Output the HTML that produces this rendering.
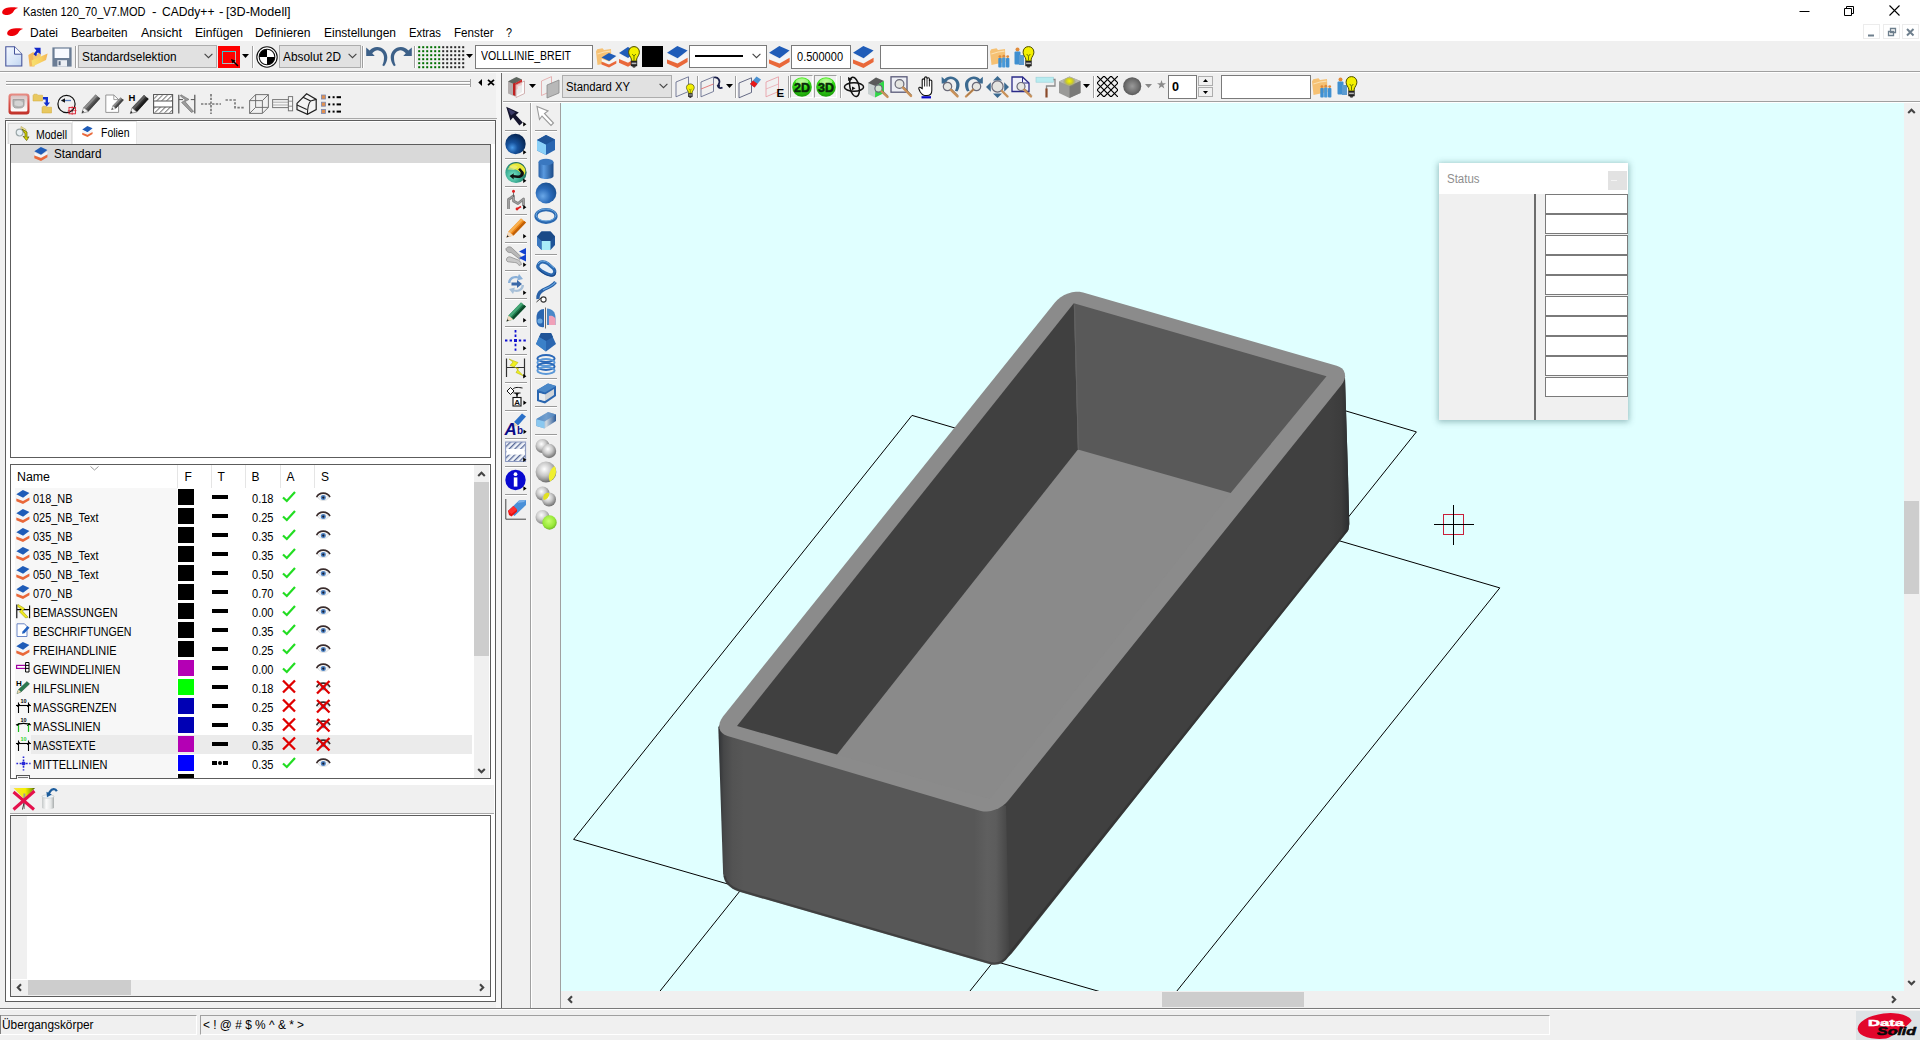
<!DOCTYPE html>
<html><head><meta charset="utf-8"><title>CADdy++</title>
<style>
html,body{margin:0;padding:0;}
body{width:1920px;height:1040px;overflow:hidden;background:#f0f0f0;font-family:"Liberation Sans",sans-serif;font-size:12px;position:relative;}
body div, body svg{position:absolute;box-sizing:border-box;}
svg{overflow:visible;}
</style></head><body>
<div style="left:0px;top:0px;width:1920px;height:41px;background:#fff;"></div>
<svg style="left:2px;top:7px;" width="16" height="8.4" viewBox="0 0 16 8.4"><path d="M0.2 4.8C0.6 2.6 3 1.1 6.5 0.6C10 0.1 14 0 16 0.9C13.8 1.6 12.6 2.6 11.8 4C10.8 6 9 7.6 5.6 8C2.6 8.3 -0.2 7.4 0.2 4.8Z" fill="#ee0008"/></svg>
<div style="left:22.5px;top:4px;font-size:12px;line-height:16px;color:#000;white-space:nowrap;transform-origin:0 0;transform:scaleX(0.9185);">Kasten 120_70_V7.MOD</div>
<div style="left:152px;top:4px;font-size:12px;line-height:16px;color:#000;white-space:nowrap;transform-origin:0 0;transform:scaleX(1.125);">-</div>
<div style="left:161.7px;top:4px;font-size:12px;line-height:16px;color:#000;white-space:nowrap;transform-origin:0 0;transform:scaleX(1.0087);">CADdy++</div>
<div style="left:219px;top:4px;font-size:12px;line-height:16px;color:#000;white-space:nowrap;transform-origin:0 0;transform:scaleX(1.125);">-</div>
<div style="left:226px;top:4px;font-size:12px;line-height:16px;color:#000;white-space:nowrap;transform-origin:0 0;transform:scaleX(1.0512);">[3D-Modell]</div>
<svg style="left:1799px;top:5px;" width="12" height="12" viewBox="0 0 12 12"><path d="M0.5 6.5H10.5" stroke="#000" stroke-width="1" fill="none"/></svg>
<svg style="left:1843px;top:5px;" width="12" height="12" viewBox="0 0 12 12"><path d="M1.5 3.5H8.5V10.5H1.5Z M3.5 3.5V1.5H10.5V8.5H8.5" stroke="#000" stroke-width="1" fill="none"/></svg>
<svg style="left:1889px;top:5px;" width="12" height="12" viewBox="0 0 12 12"><path d="M0.5 0.5L10.5 10.5M10.5 0.5L0.5 10.5" stroke="#000" stroke-width="1.1" fill="none"/></svg>
<svg style="left:7px;top:28px;" width="16" height="8.4" viewBox="0 0 16 8.4"><path d="M0.2 4.8C0.6 2.6 3 1.1 6.5 0.6C10 0.1 14 0 16 0.9C13.8 1.6 12.6 2.6 11.8 4C10.8 6 9 7.6 5.6 8C2.6 8.3 -0.2 7.4 0.2 4.8Z" fill="#ee0008"/></svg>
<div style="left:29.5px;top:25px;font-size:12px;line-height:16px;color:#000;white-space:nowrap;transform-origin:0 0;transform:scaleX(0.9994);">Datei</div>
<div style="left:70.5px;top:25px;font-size:12px;line-height:16px;color:#000;white-space:nowrap;transform-origin:0 0;transform:scaleX(0.9736);">Bearbeiten</div>
<div style="left:140.5px;top:25px;font-size:12px;line-height:16px;color:#000;white-space:nowrap;transform-origin:0 0;transform:scaleX(1.0421);">Ansicht</div>
<div style="left:194.5px;top:25px;font-size:12px;line-height:16px;color:#000;white-space:nowrap;transform-origin:0 0;transform:scaleX(1.0135);">Einfügen</div>
<div style="left:255px;top:25px;font-size:12px;line-height:16px;color:#000;white-space:nowrap;transform-origin:0 0;transform:scaleX(1.0146);">Definieren</div>
<div style="left:323.5px;top:25px;font-size:12px;line-height:16px;color:#000;white-space:nowrap;transform-origin:0 0;transform:scaleX(0.9993);">Einstellungen</div>
<div style="left:408.5px;top:25px;font-size:12px;line-height:16px;color:#000;white-space:nowrap;transform-origin:0 0;transform:scaleX(0.9412);">Extras</div>
<div style="left:453.5px;top:25px;font-size:12px;line-height:16px;color:#000;white-space:nowrap;transform-origin:0 0;transform:scaleX(0.9712);">Fenster</div>
<div style="left:506px;top:25px;font-size:12px;line-height:16px;color:#000;white-space:nowrap;transform-origin:0 0;transform:scaleX(0.8993);">?</div>
<div style="left:1863px;top:24px;width:17px;height:15px;background:#fff;border:1px solid #ececec;"></div>
<div style="left:1883px;top:24px;width:17px;height:15px;background:#fff;border:1px solid #ececec;"></div>
<div style="left:1902px;top:24px;width:17px;height:15px;background:#fff;border:1px solid #ececec;"></div>
<svg style="left:1867px;top:28px;" width="10" height="10" viewBox="0 0 10 10"><path d="M1 7.5H7" stroke="#6e7f8d" stroke-width="2" fill="none"/></svg>
<svg style="left:1887px;top:27px;" width="10" height="10" viewBox="0 0 10 10"><path d="M3.5 1.5H8.5V5.5H3.5Z M1.5 4.5H6.5V8.5H1.5Z" stroke="#6e7f8d" stroke-width="1.3" fill="#fff"/></svg>
<svg style="left:1906px;top:28px;" width="10" height="10" viewBox="0 0 10 10"><path d="M1 1L7.5 7.5M7.5 1L1 7.5" stroke="#6e7f8d" stroke-width="2" fill="none"/></svg>
<div style="left:0px;top:71px;width:1920px;height:1px;background:#a0a0a0;"></div>
<div style="left:0px;top:72px;width:1920px;height:1px;background:#fff;"></div>
<div style="left:496px;top:73px;width:5px;height:935px;background:#f6f6f6;"></div>
<div style="left:501px;top:73px;width:1px;height:935px;background:#696969;"></div>
<div style="left:503px;top:101px;width:1417px;height:1px;background:#a0a0a0;"></div>
<div style="left:503px;top:102px;width:1417px;height:1px;background:#fff;"></div>
<div style="left:530px;top:103px;width:1px;height:905px;background:#a0a0a0;"></div>
<div style="left:531px;top:103px;width:1px;height:905px;background:#fff;"></div>
<div style="left:560px;top:103px;width:1px;height:905px;background:#a0a0a0;"></div>
<div style="left:561px;top:103px;width:1343px;height:888px;background:#e0ffff;"></div>
<div style="left:0px;top:1008px;width:1920px;height:1px;background:#7a7a7a;"></div>
<div style="left:0px;top:1009px;width:1920px;height:1px;background:#fff;"></div>
<svg style="left:561px;top:103px;overflow:hidden;" width="1343" height="888" viewBox="561 103 1343 888"><defs><linearGradient id="gf" gradientUnits="userSpaceOnUse" x1="718" y1="0" x2="1009" y2="0"><stop offset="0" stop-color="#2e3033"/><stop offset="0.02" stop-color="#464748"/><stop offset="0.05" stop-color="#535353"/><stop offset="0.09" stop-color="#575757"/><stop offset="0.88" stop-color="#575757"/><stop offset="0.925" stop-color="#5f5f5f"/><stop offset="0.955" stop-color="#5c5c5c"/><stop offset="0.985" stop-color="#4c4c4c"/><stop offset="1" stop-color="#434343"/></linearGradient><linearGradient id="gr" gradientUnits="userSpaceOnUse" x1="1330" y1="0" x2="1349" y2="0"><stop offset="0" stop-color="#404040"/><stop offset="0.6" stop-color="#3c3c3c"/><stop offset="1" stop-color="#2c2e30"/></linearGradient></defs><path d="M573.6,839.4 L912,415.4 L1499.8,587.9 L1162,1009.6 Z" stroke="#000" stroke-width="1" fill="none"/><path d="M1166,357.5 L1416.4,431.9 L960.4,1003 M1166,357.5 L650.5,1003" stroke="#000" stroke-width="1" fill="none"/><polygon points="1338.0,368.0 1345.0,378.0 1347.9,470.0 1349.3,524.0 1348.4,530.1 1011.5,953.8 1009.2,956.0 1002.0,958.0 1000.0,806.0 992.0,806.0" fill="#404040"/><polygon points="1330.0,400.0 1345.0,378.0 1347.9,470.0 1349.3,524.0 1348.4,530.1 1330.0,553.0" fill="url(#gr)"/><path d="M722,722 L718.3,727 L723.1,873.3 Q724,886 738.5,891.5 L990,964.3 Q1002,967 1009.3,955.8 L1006,806 L990,800 Z" fill="url(#gf)"/><path d="M724.5,876 Q726,886 739,890.3 L990.3,963 Q1001,965.6 1008.3,955 L1347.2,530.2" stroke="#2a2a2a" stroke-opacity="0.5" stroke-width="2.2" fill="none"/><polygon points="727.5,736.0 724.5,734.8 722.2,733.1 720.4,730.9 719.4,728.3 719.2,725.4 719.8,722.4 721.1,719.4 723.0,716.4 1054.9,302.5 1057.5,299.7 1060.6,297.2 1064.2,295.1 1068.0,293.4 1072.0,292.3 1075.9,291.7 1079.6,291.8 1083.1,292.4 1336.7,365.7 1339.7,366.9 1342.1,368.6 1343.8,370.8 1344.8,373.4 1345.1,376.2 1344.5,379.2 1343.2,382.3 1341.2,385.2 1008.1,800.8 1005.5,803.6 1002.3,806.1 998.7,808.2 994.9,809.8 991.0,811.0 987.1,811.5 983.3,811.4 979.9,810.8" fill="#8b8b8b"/><polygon points="1077.9,449.5 1230.7,493.0 989.7,799.0 837.0,754.4" fill="#8a8a8a"/><polygon points="1073.8,303.2 1326.5,376.2 1230.7,493.0 1077.9,449.5" fill="#595959"/><polygon points="1073.8,303.2 1077.9,449.5 837.0,754.4 737.0,726.0" fill="#404040"/><path d="M1074.6,305.2 L1078.4,449.5" stroke="#636363" stroke-width="1" fill="none"/><rect x="1443.5" y="514.5" width="20" height="20" stroke="#c8203a" stroke-width="1" fill="none"/><path d="M1434,524.5H1474M1453.5,505V545" stroke="#000" stroke-width="1" fill="none"/></svg>
<div style="left:1434px;top:158px;width:200px;height:268px;background:radial-gradient(closest-side,rgba(120,170,175,0.0),rgba(120,170,175,0));"></div>
<div style="left:1439px;top:163px;width:189px;height:257px;background:#f0f0f0;box-shadow:0 1px 6px 1px rgba(60,110,115,0.45);"></div>
<div style="left:1439px;top:163px;width:189px;height:31px;background:#fff;"></div>
<div style="left:1447px;top:171px;font-size:12px;line-height:16px;color:#8e8e8e;white-space:nowrap;transform-origin:0 0;transform:scaleX(0.9559);">Status</div>
<div style="left:1608px;top:171px;width:19px;height:19px;background:#e2e2e2;"></div>
<div style="left:1611px;top:180px;width:6px;height:1px;background:#f4f4f4;"></div>
<div style="left:1534px;top:194px;width:2px;height:226px;background:#6d6d6d;"></div>
<div style="left:1545px;top:194px;width:83px;height:20px;background:#fff;border:1px solid #7a7a7a;"></div>
<div style="left:1545px;top:214px;width:83px;height:20px;background:#fff;border:1px solid #7a7a7a;"></div>
<div style="left:1545px;top:235px;width:83px;height:20px;background:#fff;border:1px solid #7a7a7a;"></div>
<div style="left:1545px;top:255px;width:83px;height:20px;background:#fff;border:1px solid #7a7a7a;"></div>
<div style="left:1545px;top:275px;width:83px;height:20px;background:#fff;border:1px solid #7a7a7a;"></div>
<div style="left:1545px;top:296px;width:83px;height:20px;background:#fff;border:1px solid #7a7a7a;"></div>
<div style="left:1545px;top:316px;width:83px;height:20px;background:#fff;border:1px solid #7a7a7a;"></div>
<div style="left:1545px;top:336px;width:83px;height:20px;background:#fff;border:1px solid #7a7a7a;"></div>
<div style="left:1545px;top:356px;width:83px;height:20px;background:#fff;border:1px solid #7a7a7a;"></div>
<div style="left:1545px;top:377px;width:83px;height:20px;background:#fff;border:1px solid #7a7a7a;"></div>
<div style="left:1904px;top:103px;width:16px;height:888px;background:#f0f0f0;"></div>
<div style="left:1904px;top:501px;width:15px;height:93px;background:#cdcdcd;"></div>
<svg style="left:1907px;top:108px;" width="9" height="6" viewBox="0 0 9 6"><path d="M1.2 5L4.5 1.8L7.8 5" stroke="#444" stroke-width="2.1" fill="none"/></svg>
<svg style="left:1907px;top:980px;" width="9" height="6" viewBox="0 0 9 6"><path d="M1.2 1L4.5 4.2L7.8 1" stroke="#444" stroke-width="2.1" fill="none"/></svg>
<div style="left:561px;top:991px;width:1342px;height:17px;background:#f0f0f0;"></div>
<div style="left:1162px;top:992px;width:142px;height:15px;background:#cdcdcd;"></div>
<svg style="left:567px;top:995px;" width="6" height="9" viewBox="0 0 6 9"><path d="M5 1.2L1.8 4.5L5 7.8" stroke="#444" stroke-width="2.1" fill="none"/></svg>
<svg style="left:1891px;top:995px;" width="6" height="9" viewBox="0 0 6 9"><path d="M1 1.2L4.2 4.5L1 7.8" stroke="#444" stroke-width="2.1" fill="none"/></svg>
<div style="left:1903px;top:991px;width:17px;height:17px;background:#f0f0f0;"></div>
<div style="left:75px;top:46px;width:1px;height:22px;background:#a0a0a0;"></div>
<div style="left:76px;top:46px;width:1px;height:22px;background:#fff;"></div>
<div style="left:78px;top:45px;width:139px;height:23px;background:#e1e1e1;border:1px solid #adadad;"></div>
<div style="left:82px;top:49px;font-size:12px;line-height:16px;color:#000;white-space:nowrap;transform-origin:0 0;transform:scaleX(0.9839);">Standardselektion</div>
<svg style="left:204px;top:53px;" width="9" height="6" viewBox="0 0 9 6"><path d="M0.6 0.8L4.5 4.7L8.4 0.8" stroke="#444" stroke-width="1.1" fill="none"/></svg>
<div style="left:218px;top:46px;width:22px;height:22px;background:#ff0000;"></div>
<div style="left:222px;top:51px;width:14px;height:13px;border:1px solid #30c8d0;border-right-color:#b8b8b8;border-bottom-color:#b8b8b8;"></div>
<svg style="left:230px;top:58px;" width="10" height="10" viewBox="0 0 10 10"><path d="M1 1L5.5 2.5L4.3 3.2L8.5 7.5L7.5 8.5L3.2 4.3L2.5 5.5Z" fill="#000"/></svg>
<svg style="left:242px;top:54px;" width="7" height="4" viewBox="0 0 7 4"><path d="M0 0H7L3.5 4Z" fill="#000"/></svg>
<div style="left:252px;top:46px;width:1px;height:22px;background:#a0a0a0;"></div>
<div style="left:253px;top:46px;width:1px;height:22px;background:#fff;"></div>
<div style="left:279px;top:45px;width:82px;height:23px;background:#e1e1e1;border:1px solid #adadad;"></div>
<div style="left:283px;top:49px;font-size:12px;line-height:16px;color:#000;white-space:nowrap;transform-origin:0 0;transform:scaleX(0.9883);">Absolut 2D</div>
<svg style="left:348px;top:53px;" width="9" height="6" viewBox="0 0 9 6"><path d="M0.6 0.8L4.5 4.7L8.4 0.8" stroke="#444" stroke-width="1.1" fill="none"/></svg>
<div style="left:362px;top:46px;width:1px;height:22px;background:#a0a0a0;"></div>
<div style="left:363px;top:46px;width:1px;height:22px;background:#fff;"></div>
<div style="left:414px;top:46px;width:1px;height:22px;background:#a0a0a0;"></div>
<div style="left:415px;top:46px;width:1px;height:22px;background:#fff;"></div>
<svg style="left:418px;top:46px;" width="48" height="24" viewBox="0 0 48 24"><rect x="0.2" y="0.2" width="2" height="2" fill="#006e00"/><rect x="0.2" y="4.2" width="2" height="2" fill="#006e00"/><rect x="0.2" y="8.2" width="2" height="2" fill="#006e00"/><rect x="0.2" y="12.2" width="2" height="2" fill="#006e00"/><rect x="0.2" y="16.2" width="2" height="2" fill="#006e00"/><rect x="0.2" y="20.2" width="2" height="2" fill="#006e00"/><rect x="4.2" y="0.2" width="2" height="2" fill="#006e00"/><rect x="4.2" y="4.2" width="2" height="2" fill="#006e00"/><rect x="4.2" y="8.2" width="2" height="2" fill="#006e00"/><rect x="4.2" y="12.2" width="2" height="2" fill="#006e00"/><rect x="4.2" y="16.2" width="2" height="2" fill="#006e00"/><rect x="4.2" y="20.2" width="2" height="2" fill="#006e00"/><rect x="8.2" y="0.2" width="2" height="2" fill="#006e00"/><rect x="8.2" y="4.2" width="2" height="2" fill="#006e00"/><rect x="8.2" y="8.2" width="2" height="2" fill="#006e00"/><rect x="8.2" y="12.2" width="2" height="2" fill="#006e00"/><rect x="8.2" y="16.2" width="2" height="2" fill="#006e00"/><rect x="8.2" y="20.2" width="2" height="2" fill="#006e00"/><rect x="12.2" y="0.2" width="2" height="2" fill="#006e00"/><rect x="12.2" y="4.2" width="2" height="2" fill="#006e00"/><rect x="12.2" y="8.2" width="2" height="2" fill="#006e00"/><rect x="12.2" y="12.2" width="2" height="2" fill="#006e00"/><rect x="12.2" y="16.2" width="2" height="2" fill="#006e00"/><rect x="12.2" y="20.2" width="2" height="2" fill="#006e00"/><rect x="16.2" y="0.2" width="2" height="2" fill="#006e00"/><rect x="16.2" y="4.2" width="2" height="2" fill="#006e00"/><rect x="16.2" y="8.2" width="2" height="2" fill="#006e00"/><rect x="16.2" y="12.2" width="2" height="2" fill="#006e00"/><rect x="16.2" y="16.2" width="2" height="2" fill="#006e00"/><rect x="16.2" y="20.2" width="2" height="2" fill="#006e00"/><rect x="20.2" y="0.2" width="2" height="2" fill="#006e00"/><rect x="20.2" y="4.2" width="2" height="2" fill="#006e00"/><rect x="20.2" y="8.2" width="2" height="2" fill="#006e00"/><rect x="20.2" y="12.2" width="2" height="2" fill="#006e00"/><rect x="20.2" y="16.2" width="2" height="2" fill="#006e00"/><rect x="20.2" y="20.2" width="2" height="2" fill="#006e00"/><rect x="24.2" y="0.2" width="2" height="2" fill="#2a2a2a"/><rect x="24.2" y="4.2" width="2" height="2" fill="#2a2a2a"/><rect x="24.2" y="8.2" width="2" height="2" fill="#2a2a2a"/><rect x="24.2" y="12.2" width="2" height="2" fill="#2a2a2a"/><rect x="24.2" y="16.2" width="2" height="2" fill="#2a2a2a"/><rect x="24.2" y="20.2" width="2" height="2" fill="#2a2a2a"/><rect x="28.2" y="0.2" width="2" height="2" fill="#2a2a2a"/><rect x="28.2" y="4.2" width="2" height="2" fill="#2a2a2a"/><rect x="28.2" y="8.2" width="2" height="2" fill="#2a2a2a"/><rect x="28.2" y="12.2" width="2" height="2" fill="#2a2a2a"/><rect x="28.2" y="16.2" width="2" height="2" fill="#2a2a2a"/><rect x="28.2" y="20.2" width="2" height="2" fill="#2a2a2a"/><rect x="32.2" y="0.2" width="2" height="2" fill="#2a2a2a"/><rect x="32.2" y="4.2" width="2" height="2" fill="#2a2a2a"/><rect x="32.2" y="8.2" width="2" height="2" fill="#2a2a2a"/><rect x="32.2" y="12.2" width="2" height="2" fill="#2a2a2a"/><rect x="32.2" y="16.2" width="2" height="2" fill="#2a2a2a"/><rect x="32.2" y="20.2" width="2" height="2" fill="#2a2a2a"/><rect x="36.2" y="0.2" width="2" height="2" fill="#2a2a2a"/><rect x="36.2" y="4.2" width="2" height="2" fill="#2a2a2a"/><rect x="36.2" y="8.2" width="2" height="2" fill="#2a2a2a"/><rect x="36.2" y="12.2" width="2" height="2" fill="#2a2a2a"/><rect x="36.2" y="16.2" width="2" height="2" fill="#2a2a2a"/><rect x="36.2" y="20.2" width="2" height="2" fill="#2a2a2a"/><rect x="40.2" y="0.2" width="2" height="2" fill="#2a2a2a"/><rect x="40.2" y="4.2" width="2" height="2" fill="#2a2a2a"/><rect x="40.2" y="8.2" width="2" height="2" fill="#2a2a2a"/><rect x="40.2" y="12.2" width="2" height="2" fill="#2a2a2a"/><rect x="40.2" y="16.2" width="2" height="2" fill="#2a2a2a"/><rect x="40.2" y="20.2" width="2" height="2" fill="#2a2a2a"/><rect x="44.2" y="0.2" width="2" height="2" fill="#2a2a2a"/><rect x="44.2" y="4.2" width="2" height="2" fill="#2a2a2a"/><rect x="44.2" y="8.2" width="2" height="2" fill="#2a2a2a"/><rect x="44.2" y="12.2" width="2" height="2" fill="#2a2a2a"/><rect x="44.2" y="16.2" width="2" height="2" fill="#2a2a2a"/><rect x="44.2" y="20.2" width="2" height="2" fill="#2a2a2a"/></svg>
<svg style="left:466px;top:54px;" width="7" height="4" viewBox="0 0 7 4"><path d="M0 0H7L3.5 4Z" fill="#000"/></svg>
<div style="left:475px;top:45px;width:118px;height:24px;background:#fff;border:1px solid #7a7a7a;"></div>
<div style="left:481px;top:48px;font-size:12px;line-height:16px;color:#000;white-space:nowrap;transform-origin:0 0;transform:scaleX(0.8766);">VOLLLINIE_BREIT</div>
<div style="left:642px;top:46px;width:21px;height:21px;background:#000;"></div>
<div style="left:689px;top:45px;width:78px;height:23px;background:#fff;border:1px solid #7a7a7a;"></div>
<svg style="left:752px;top:53px;" width="9" height="6" viewBox="0 0 9 6"><path d="M0.6 0.8L4.5 4.7L8.4 0.8" stroke="#444" stroke-width="1.1" fill="none"/></svg>
<div style="left:695px;top:55px;width:48px;height:2px;background:#000;"></div>
<div style="left:791px;top:45px;width:60px;height:24px;background:#fff;border:1px solid #7a7a7a;"></div>
<div style="left:797px;top:49px;font-size:12px;line-height:16px;color:#000;white-space:nowrap;transform-origin:0 0;transform:scaleX(0.9194);">0.500000</div>
<div style="left:880px;top:45px;width:108px;height:24px;background:#fff;border:1px solid #7a7a7a;"></div>
<svg style="left:529px;top:84px;" width="7" height="4" viewBox="0 0 7 4"><path d="M0 0H7L3.5 4Z" fill="#000"/></svg>
<div style="left:562px;top:75px;width:110px;height:23px;background:#e1e1e1;border:1px solid #adadad;"></div>
<div style="left:566px;top:79px;font-size:12px;line-height:16px;color:#000;white-space:nowrap;transform-origin:0 0;transform:scaleX(0.941);">Standard XY</div>
<svg style="left:659px;top:83px;" width="9" height="6" viewBox="0 0 9 6"><path d="M0.6 0.8L4.5 4.7L8.4 0.8" stroke="#444" stroke-width="1.1" fill="none"/></svg>
<div style="left:697px;top:76px;width:1px;height:22px;background:#a0a0a0;"></div>
<div style="left:698px;top:76px;width:1px;height:22px;background:#fff;"></div>
<svg style="left:726px;top:84px;" width="7" height="4" viewBox="0 0 7 4"><path d="M0 0H7L3.5 4Z" fill="#000"/></svg>
<div style="left:735px;top:76px;width:1px;height:22px;background:#a0a0a0;"></div>
<div style="left:736px;top:76px;width:1px;height:22px;background:#fff;"></div>
<div style="left:788px;top:76px;width:1px;height:22px;background:#a0a0a0;"></div>
<div style="left:789px;top:76px;width:1px;height:22px;background:#fff;"></div>
<div style="left:840px;top:76px;width:1px;height:22px;background:#a0a0a0;"></div>
<div style="left:841px;top:76px;width:1px;height:22px;background:#fff;"></div>
<svg style="left:1083px;top:84px;" width="7" height="4" viewBox="0 0 7 4"><path d="M0 0H7L3.5 4Z" fill="#000"/></svg>
<div style="left:1093px;top:76px;width:1px;height:22px;background:#a0a0a0;"></div>
<div style="left:1094px;top:76px;width:1px;height:22px;background:#fff;"></div>
<svg style="left:1145px;top:84px;" width="7" height="4" viewBox="0 0 7 4"><path d="M0 0H7L3.5 4Z" fill="#888"/></svg>
<div style="left:1168px;top:75px;width:29px;height:24px;background:#fff;border:1px solid #7a7a7a;"></div>
<div style="left:1171.5px;top:79px;font-size:12px;line-height:16px;color:#000;white-space:nowrap;transform-origin:0 0;transform:scaleX(1.0492);font-weight:bold;">0</div>
<div style="left:1198px;top:76px;width:15px;height:10px;background:#f0f0f0;border:1px solid #adadad;"></div>
<div style="left:1198px;top:87px;width:15px;height:10px;background:#f0f0f0;border:1px solid #adadad;"></div>
<svg style="left:1203px;top:79px;" width="5" height="3" viewBox="0 0 5 3"><path d="M0 3H5L2.5 0Z" fill="#000"/></svg>
<svg style="left:1203px;top:91px;" width="5" height="3" viewBox="0 0 5 3"><path d="M0 0H5L2.5 3Z" fill="#000"/></svg>
<div style="left:1221px;top:75px;width:90px;height:24px;background:#fff;border:1px solid #7a7a7a;"></div>
<div style="left:6px;top:81px;width:465px;height:1px;background:#a0a0a0;"></div>
<div style="left:6px;top:82px;width:465px;height:1px;background:#fff;"></div>
<div style="left:6px;top:84px;width:465px;height:1px;background:#a0a0a0;"></div>
<div style="left:6px;top:85px;width:465px;height:1px;background:#fff;"></div>
<div style="left:470px;top:79px;width:1px;height:8px;background:#a0a0a0;"></div>
<svg style="left:478px;top:79px;" width="5" height="7" viewBox="0 0 5 7"><path d="M4 0V7L0.3 3.5Z" fill="#000"/></svg>
<svg style="left:487px;top:79px;" width="8" height="7" viewBox="0 0 8 7"><path d="M1 0.8L7 6.2M7 0.8L1 6.2" stroke="#000" stroke-width="1.8" fill="none"/></svg>
<div style="left:5px;top:118px;width:492px;height:1px;background:#a8a8a8;"></div>
<div style="left:5px;top:120px;width:491px;height:882px;background:#fff;border:1px solid #5c5c5c;"></div>
<div style="left:7px;top:122px;width:488px;height:22px;background:#f0f0f0;"></div>
<div style="left:8px;top:123px;width:64px;height:21px;background:#f0f0f0;border:1px solid #dadada;border-bottom:none;"></div>
<div style="left:72px;top:121px;width:65px;height:23px;background:#fff;border:1px solid #e6e6e6;border-bottom:none;"></div>
<div style="left:36px;top:127px;font-size:12px;line-height:16px;color:#000;white-space:nowrap;transform-origin:0 0;transform:scaleX(0.8767);">Modell</div>
<div style="left:100.5px;top:124.5px;font-size:12px;line-height:16px;color:#000;white-space:nowrap;transform-origin:0 0;transform:scaleX(0.8719);">Folien</div>
<div style="left:10px;top:144px;width:481px;height:314px;background:#fff;border:1px solid #5c5c5c;"></div>
<div style="left:11px;top:145px;width:479px;height:18px;background:#d9d9d9;"></div>
<div style="left:54px;top:146px;font-size:12px;line-height:16px;color:#000;white-space:nowrap;transform-origin:0 0;transform:scaleX(0.9756);">Standard</div>
<div style="left:10px;top:464px;width:481px;height:315px;background:#fff;border:1px solid #5c5c5c;"></div>
<div style="left:10px;top:785px;width:484px;height:29px;background:#f0f0f0;border-bottom:1px solid #a8a8a8;"></div>
<div style="left:15px;top:488px;width:162px;height:290px;background:#f7f7f7;"></div>
<div style="left:177px;top:465px;width:1px;height:23px;background:#e5e5e5;"></div>
<div style="left:211px;top:465px;width:1px;height:23px;background:#e5e5e5;"></div>
<div style="left:245px;top:465px;width:1px;height:23px;background:#e5e5e5;"></div>
<div style="left:280px;top:465px;width:1px;height:23px;background:#e5e5e5;"></div>
<div style="left:314px;top:465px;width:1px;height:23px;background:#e5e5e5;"></div>
<div style="left:17px;top:469px;font-size:12px;line-height:16px;color:#000;white-space:nowrap;transform-origin:0 0;transform:scaleX(1.0307);">Name</div>
<svg style="left:90px;top:466px;" width="9" height="5" viewBox="0 0 9 5"><path d="M0.5 0.5L4.5 4L8.5 0.5" stroke="#9a9a9a" stroke-width="1" fill="none"/></svg>
<div style="left:184.5px;top:469px;font-size:12px;line-height:16px;color:#000;white-space:nowrap;">F</div>
<div style="left:217.5px;top:469px;font-size:12px;line-height:16px;color:#000;white-space:nowrap;">T</div>
<div style="left:251.5px;top:469px;font-size:12px;line-height:16px;color:#000;white-space:nowrap;">B</div>
<div style="left:286.5px;top:469px;font-size:12px;line-height:16px;color:#000;white-space:nowrap;">A</div>
<div style="left:321px;top:469px;font-size:12px;line-height:16px;color:#000;white-space:nowrap;">S</div>
<div style="left:33px;top:490.6px;font-size:12px;line-height:16px;color:#000;white-space:nowrap;transform-origin:0 0;transform:scaleX(0.911);">018_NB</div>
<div style="left:178px;top:489px;width:16px;height:16px;background:#000;"></div>
<div style="left:212px;top:495px;width:16px;height:4px;background:#000;"></div>
<div style="left:251.5px;top:490.6px;font-size:12px;line-height:16px;color:#000;white-space:nowrap;transform-origin:0 0;transform:scaleX(0.921);">0.18</div>
<svg style="left:282px;top:491px;" width="14" height="14" viewBox="0 0 14 14"><path d="M1 6.5L4.8 10L13 1" stroke="#22dd22" stroke-width="2.2" fill="none"/></svg>
<svg style="left:316px;top:492px;" width="15" height="12" viewBox="0 0 15 12"><path d="M0.6 5.2C3 -0.2 11.4 -0.2 14 5.2" stroke="#3a2c2c" stroke-width="1.6" fill="none"/><path d="M2 5.8C4.4 9.4 10.4 9.4 12.8 5.8C10 2.6 4.8 2.6 2 5.8Z" fill="#f4f6f8" stroke="#c0c4c8" stroke-width="0.5"/><circle cx="7.3" cy="5.6" r="2.5" fill="#4a7fc0"/><circle cx="7.3" cy="5.6" r="1.1" fill="#1a1a2a"/></svg>
<div style="left:33px;top:509.6px;font-size:12px;line-height:16px;color:#000;white-space:nowrap;transform-origin:0 0;transform:scaleX(0.9093);">025_NB_Text</div>
<div style="left:178px;top:508px;width:16px;height:16px;background:#000;"></div>
<div style="left:212px;top:514px;width:16px;height:4px;background:#000;"></div>
<div style="left:251.5px;top:509.6px;font-size:12px;line-height:16px;color:#000;white-space:nowrap;transform-origin:0 0;transform:scaleX(0.921);">0.25</div>
<svg style="left:282px;top:510px;" width="14" height="14" viewBox="0 0 14 14"><path d="M1 6.5L4.8 10L13 1" stroke="#22dd22" stroke-width="2.2" fill="none"/></svg>
<svg style="left:316px;top:511px;" width="15" height="12" viewBox="0 0 15 12"><path d="M0.6 5.2C3 -0.2 11.4 -0.2 14 5.2" stroke="#3a2c2c" stroke-width="1.6" fill="none"/><path d="M2 5.8C4.4 9.4 10.4 9.4 12.8 5.8C10 2.6 4.8 2.6 2 5.8Z" fill="#f4f6f8" stroke="#c0c4c8" stroke-width="0.5"/><circle cx="7.3" cy="5.6" r="2.5" fill="#4a7fc0"/><circle cx="7.3" cy="5.6" r="1.1" fill="#1a1a2a"/></svg>
<div style="left:33px;top:528.6px;font-size:12px;line-height:16px;color:#000;white-space:nowrap;transform-origin:0 0;transform:scaleX(0.911);">035_NB</div>
<div style="left:178px;top:527px;width:16px;height:16px;background:#000;"></div>
<div style="left:212px;top:533px;width:16px;height:4px;background:#000;"></div>
<div style="left:251.5px;top:528.6px;font-size:12px;line-height:16px;color:#000;white-space:nowrap;transform-origin:0 0;transform:scaleX(0.921);">0.35</div>
<svg style="left:282px;top:529px;" width="14" height="14" viewBox="0 0 14 14"><path d="M1 6.5L4.8 10L13 1" stroke="#22dd22" stroke-width="2.2" fill="none"/></svg>
<svg style="left:316px;top:530px;" width="15" height="12" viewBox="0 0 15 12"><path d="M0.6 5.2C3 -0.2 11.4 -0.2 14 5.2" stroke="#3a2c2c" stroke-width="1.6" fill="none"/><path d="M2 5.8C4.4 9.4 10.4 9.4 12.8 5.8C10 2.6 4.8 2.6 2 5.8Z" fill="#f4f6f8" stroke="#c0c4c8" stroke-width="0.5"/><circle cx="7.3" cy="5.6" r="2.5" fill="#4a7fc0"/><circle cx="7.3" cy="5.6" r="1.1" fill="#1a1a2a"/></svg>
<div style="left:33px;top:547.6px;font-size:12px;line-height:16px;color:#000;white-space:nowrap;transform-origin:0 0;transform:scaleX(0.9093);">035_NB_Text</div>
<div style="left:178px;top:546px;width:16px;height:16px;background:#000;"></div>
<div style="left:212px;top:552px;width:16px;height:4px;background:#000;"></div>
<div style="left:251.5px;top:547.6px;font-size:12px;line-height:16px;color:#000;white-space:nowrap;transform-origin:0 0;transform:scaleX(0.921);">0.35</div>
<svg style="left:282px;top:548px;" width="14" height="14" viewBox="0 0 14 14"><path d="M1 6.5L4.8 10L13 1" stroke="#22dd22" stroke-width="2.2" fill="none"/></svg>
<svg style="left:316px;top:549px;" width="15" height="12" viewBox="0 0 15 12"><path d="M0.6 5.2C3 -0.2 11.4 -0.2 14 5.2" stroke="#3a2c2c" stroke-width="1.6" fill="none"/><path d="M2 5.8C4.4 9.4 10.4 9.4 12.8 5.8C10 2.6 4.8 2.6 2 5.8Z" fill="#f4f6f8" stroke="#c0c4c8" stroke-width="0.5"/><circle cx="7.3" cy="5.6" r="2.5" fill="#4a7fc0"/><circle cx="7.3" cy="5.6" r="1.1" fill="#1a1a2a"/></svg>
<div style="left:33px;top:566.6px;font-size:12px;line-height:16px;color:#000;white-space:nowrap;transform-origin:0 0;transform:scaleX(0.9093);">050_NB_Text</div>
<div style="left:178px;top:565px;width:16px;height:16px;background:#000;"></div>
<div style="left:212px;top:571px;width:16px;height:4px;background:#000;"></div>
<div style="left:251.5px;top:566.6px;font-size:12px;line-height:16px;color:#000;white-space:nowrap;transform-origin:0 0;transform:scaleX(0.921);">0.50</div>
<svg style="left:282px;top:567px;" width="14" height="14" viewBox="0 0 14 14"><path d="M1 6.5L4.8 10L13 1" stroke="#22dd22" stroke-width="2.2" fill="none"/></svg>
<svg style="left:316px;top:568px;" width="15" height="12" viewBox="0 0 15 12"><path d="M0.6 5.2C3 -0.2 11.4 -0.2 14 5.2" stroke="#3a2c2c" stroke-width="1.6" fill="none"/><path d="M2 5.8C4.4 9.4 10.4 9.4 12.8 5.8C10 2.6 4.8 2.6 2 5.8Z" fill="#f4f6f8" stroke="#c0c4c8" stroke-width="0.5"/><circle cx="7.3" cy="5.6" r="2.5" fill="#4a7fc0"/><circle cx="7.3" cy="5.6" r="1.1" fill="#1a1a2a"/></svg>
<div style="left:33px;top:585.6px;font-size:12px;line-height:16px;color:#000;white-space:nowrap;transform-origin:0 0;transform:scaleX(0.911);">070_NB</div>
<div style="left:178px;top:584px;width:16px;height:16px;background:#000;"></div>
<div style="left:212px;top:590px;width:16px;height:4px;background:#000;"></div>
<div style="left:251.5px;top:585.6px;font-size:12px;line-height:16px;color:#000;white-space:nowrap;transform-origin:0 0;transform:scaleX(0.921);">0.70</div>
<svg style="left:282px;top:586px;" width="14" height="14" viewBox="0 0 14 14"><path d="M1 6.5L4.8 10L13 1" stroke="#22dd22" stroke-width="2.2" fill="none"/></svg>
<svg style="left:316px;top:587px;" width="15" height="12" viewBox="0 0 15 12"><path d="M0.6 5.2C3 -0.2 11.4 -0.2 14 5.2" stroke="#3a2c2c" stroke-width="1.6" fill="none"/><path d="M2 5.8C4.4 9.4 10.4 9.4 12.8 5.8C10 2.6 4.8 2.6 2 5.8Z" fill="#f4f6f8" stroke="#c0c4c8" stroke-width="0.5"/><circle cx="7.3" cy="5.6" r="2.5" fill="#4a7fc0"/><circle cx="7.3" cy="5.6" r="1.1" fill="#1a1a2a"/></svg>
<div style="left:33px;top:604.6px;font-size:12px;line-height:16px;color:#000;white-space:nowrap;transform-origin:0 0;transform:scaleX(0.9053);">BEMASSUNGEN</div>
<div style="left:178px;top:603px;width:16px;height:16px;background:#000;"></div>
<div style="left:212px;top:609px;width:16px;height:4px;background:#000;"></div>
<div style="left:251.5px;top:604.6px;font-size:12px;line-height:16px;color:#000;white-space:nowrap;transform-origin:0 0;transform:scaleX(0.921);">0.00</div>
<svg style="left:282px;top:605px;" width="14" height="14" viewBox="0 0 14 14"><path d="M1 6.5L4.8 10L13 1" stroke="#22dd22" stroke-width="2.2" fill="none"/></svg>
<svg style="left:316px;top:606px;" width="15" height="12" viewBox="0 0 15 12"><path d="M0.6 5.2C3 -0.2 11.4 -0.2 14 5.2" stroke="#3a2c2c" stroke-width="1.6" fill="none"/><path d="M2 5.8C4.4 9.4 10.4 9.4 12.8 5.8C10 2.6 4.8 2.6 2 5.8Z" fill="#f4f6f8" stroke="#c0c4c8" stroke-width="0.5"/><circle cx="7.3" cy="5.6" r="2.5" fill="#4a7fc0"/><circle cx="7.3" cy="5.6" r="1.1" fill="#1a1a2a"/></svg>
<div style="left:33px;top:623.6px;font-size:12px;line-height:16px;color:#000;white-space:nowrap;transform-origin:0 0;transform:scaleX(0.8846);">BESCHRIFTUNGEN</div>
<div style="left:178px;top:622px;width:16px;height:16px;background:#000;"></div>
<div style="left:212px;top:628px;width:16px;height:4px;background:#000;"></div>
<div style="left:251.5px;top:623.6px;font-size:12px;line-height:16px;color:#000;white-space:nowrap;transform-origin:0 0;transform:scaleX(0.921);">0.35</div>
<svg style="left:282px;top:624px;" width="14" height="14" viewBox="0 0 14 14"><path d="M1 6.5L4.8 10L13 1" stroke="#22dd22" stroke-width="2.2" fill="none"/></svg>
<svg style="left:316px;top:625px;" width="15" height="12" viewBox="0 0 15 12"><path d="M0.6 5.2C3 -0.2 11.4 -0.2 14 5.2" stroke="#3a2c2c" stroke-width="1.6" fill="none"/><path d="M2 5.8C4.4 9.4 10.4 9.4 12.8 5.8C10 2.6 4.8 2.6 2 5.8Z" fill="#f4f6f8" stroke="#c0c4c8" stroke-width="0.5"/><circle cx="7.3" cy="5.6" r="2.5" fill="#4a7fc0"/><circle cx="7.3" cy="5.6" r="1.1" fill="#1a1a2a"/></svg>
<div style="left:33px;top:642.6px;font-size:12px;line-height:16px;color:#000;white-space:nowrap;transform-origin:0 0;transform:scaleX(0.9141);">FREIHANDLINIE</div>
<div style="left:178px;top:641px;width:16px;height:16px;background:#000;"></div>
<div style="left:212px;top:647px;width:16px;height:4px;background:#000;"></div>
<div style="left:251.5px;top:642.6px;font-size:12px;line-height:16px;color:#000;white-space:nowrap;transform-origin:0 0;transform:scaleX(0.921);">0.25</div>
<svg style="left:282px;top:643px;" width="14" height="14" viewBox="0 0 14 14"><path d="M1 6.5L4.8 10L13 1" stroke="#22dd22" stroke-width="2.2" fill="none"/></svg>
<svg style="left:316px;top:644px;" width="15" height="12" viewBox="0 0 15 12"><path d="M0.6 5.2C3 -0.2 11.4 -0.2 14 5.2" stroke="#3a2c2c" stroke-width="1.6" fill="none"/><path d="M2 5.8C4.4 9.4 10.4 9.4 12.8 5.8C10 2.6 4.8 2.6 2 5.8Z" fill="#f4f6f8" stroke="#c0c4c8" stroke-width="0.5"/><circle cx="7.3" cy="5.6" r="2.5" fill="#4a7fc0"/><circle cx="7.3" cy="5.6" r="1.1" fill="#1a1a2a"/></svg>
<div style="left:33px;top:661.6px;font-size:12px;line-height:16px;color:#000;white-space:nowrap;transform-origin:0 0;transform:scaleX(0.9115);">GEWINDELINIEN</div>
<div style="left:178px;top:660px;width:16px;height:16px;background:#b400b4;"></div>
<div style="left:212px;top:666px;width:16px;height:4px;background:#000;"></div>
<div style="left:251.5px;top:661.6px;font-size:12px;line-height:16px;color:#000;white-space:nowrap;transform-origin:0 0;transform:scaleX(0.921);">0.00</div>
<svg style="left:282px;top:662px;" width="14" height="14" viewBox="0 0 14 14"><path d="M1 6.5L4.8 10L13 1" stroke="#22dd22" stroke-width="2.2" fill="none"/></svg>
<svg style="left:316px;top:663px;" width="15" height="12" viewBox="0 0 15 12"><path d="M0.6 5.2C3 -0.2 11.4 -0.2 14 5.2" stroke="#3a2c2c" stroke-width="1.6" fill="none"/><path d="M2 5.8C4.4 9.4 10.4 9.4 12.8 5.8C10 2.6 4.8 2.6 2 5.8Z" fill="#f4f6f8" stroke="#c0c4c8" stroke-width="0.5"/><circle cx="7.3" cy="5.6" r="2.5" fill="#4a7fc0"/><circle cx="7.3" cy="5.6" r="1.1" fill="#1a1a2a"/></svg>
<div style="left:33px;top:680.6px;font-size:12px;line-height:16px;color:#000;white-space:nowrap;transform-origin:0 0;transform:scaleX(0.9151);">HILFSLINIEN</div>
<div style="left:178px;top:679px;width:16px;height:16px;background:#00ff00;"></div>
<div style="left:212px;top:685px;width:16px;height:4px;background:#000;"></div>
<div style="left:251.5px;top:680.6px;font-size:12px;line-height:16px;color:#000;white-space:nowrap;transform-origin:0 0;transform:scaleX(0.921);">0.18</div>
<svg style="left:282px;top:680px;" width="14" height="14" viewBox="0 0 14 14"><path d="M1 0.5L13 12.5M13 0.5L1 12.5" stroke="#e00000" stroke-width="2.3" fill="none"/></svg>
<svg style="left:316px;top:682px;" width="15" height="12" viewBox="0 0 15 12"><path d="M0.6 5.2C3 -0.2 11.4 -0.2 14 5.2" stroke="#3a2c2c" stroke-width="1.6" fill="none"/><path d="M2 5.8C4.4 9.4 10.4 9.4 12.8 5.8C10 2.6 4.8 2.6 2 5.8Z" fill="#f4f6f8" stroke="#c0c4c8" stroke-width="0.5"/><circle cx="7.3" cy="5.6" r="2.5" fill="#4a7fc0"/><circle cx="7.3" cy="5.6" r="1.1" fill="#1a1a2a"/><path d="M1 -1L13.5 11.5M13.5 -1L1 11.5" stroke="#e00000" stroke-width="2.3" fill="none"/></svg>
<div style="left:33px;top:699.6px;font-size:12px;line-height:16px;color:#000;white-space:nowrap;transform-origin:0 0;transform:scaleX(0.901);">MASSGRENZEN</div>
<div style="left:178px;top:698px;width:16px;height:16px;background:#0000b4;"></div>
<div style="left:212px;top:704px;width:16px;height:4px;background:#000;"></div>
<div style="left:251.5px;top:699.6px;font-size:12px;line-height:16px;color:#000;white-space:nowrap;transform-origin:0 0;transform:scaleX(0.921);">0.25</div>
<svg style="left:282px;top:699px;" width="14" height="14" viewBox="0 0 14 14"><path d="M1 0.5L13 12.5M13 0.5L1 12.5" stroke="#e00000" stroke-width="2.3" fill="none"/></svg>
<svg style="left:316px;top:701px;" width="15" height="12" viewBox="0 0 15 12"><path d="M0.6 5.2C3 -0.2 11.4 -0.2 14 5.2" stroke="#3a2c2c" stroke-width="1.6" fill="none"/><path d="M2 5.8C4.4 9.4 10.4 9.4 12.8 5.8C10 2.6 4.8 2.6 2 5.8Z" fill="#f4f6f8" stroke="#c0c4c8" stroke-width="0.5"/><circle cx="7.3" cy="5.6" r="2.5" fill="#4a7fc0"/><circle cx="7.3" cy="5.6" r="1.1" fill="#1a1a2a"/><path d="M1 -1L13.5 11.5M13.5 -1L1 11.5" stroke="#e00000" stroke-width="2.3" fill="none"/></svg>
<div style="left:33px;top:718.6px;font-size:12px;line-height:16px;color:#000;white-space:nowrap;transform-origin:0 0;transform:scaleX(0.9288);">MASSLINIEN</div>
<div style="left:178px;top:717px;width:16px;height:16px;background:#0000b4;"></div>
<div style="left:212px;top:723px;width:16px;height:4px;background:#000;"></div>
<div style="left:251.5px;top:718.6px;font-size:12px;line-height:16px;color:#000;white-space:nowrap;transform-origin:0 0;transform:scaleX(0.921);">0.35</div>
<svg style="left:282px;top:718px;" width="14" height="14" viewBox="0 0 14 14"><path d="M1 0.5L13 12.5M13 0.5L1 12.5" stroke="#e00000" stroke-width="2.3" fill="none"/></svg>
<svg style="left:316px;top:720px;" width="15" height="12" viewBox="0 0 15 12"><path d="M0.6 5.2C3 -0.2 11.4 -0.2 14 5.2" stroke="#3a2c2c" stroke-width="1.6" fill="none"/><path d="M2 5.8C4.4 9.4 10.4 9.4 12.8 5.8C10 2.6 4.8 2.6 2 5.8Z" fill="#f4f6f8" stroke="#c0c4c8" stroke-width="0.5"/><circle cx="7.3" cy="5.6" r="2.5" fill="#4a7fc0"/><circle cx="7.3" cy="5.6" r="1.1" fill="#1a1a2a"/><path d="M1 -1L13.5 11.5M13.5 -1L1 11.5" stroke="#e00000" stroke-width="2.3" fill="none"/></svg>
<div style="left:31px;top:735px;width:441px;height:19px;background:#ebebeb;"></div>
<div style="left:33px;top:737.6px;font-size:12px;line-height:16px;color:#000;white-space:nowrap;transform-origin:0 0;transform:scaleX(0.8602);">MASSTEXTE</div>
<div style="left:178px;top:736px;width:16px;height:16px;background:#b400b4;"></div>
<div style="left:212px;top:742px;width:16px;height:4px;background:#000;"></div>
<div style="left:251.5px;top:737.6px;font-size:12px;line-height:16px;color:#000;white-space:nowrap;transform-origin:0 0;transform:scaleX(0.921);">0.35</div>
<svg style="left:282px;top:737px;" width="14" height="14" viewBox="0 0 14 14"><path d="M1 0.5L13 12.5M13 0.5L1 12.5" stroke="#e00000" stroke-width="2.3" fill="none"/></svg>
<svg style="left:316px;top:739px;" width="15" height="12" viewBox="0 0 15 12"><path d="M0.6 5.2C3 -0.2 11.4 -0.2 14 5.2" stroke="#3a2c2c" stroke-width="1.6" fill="none"/><path d="M2 5.8C4.4 9.4 10.4 9.4 12.8 5.8C10 2.6 4.8 2.6 2 5.8Z" fill="#f4f6f8" stroke="#c0c4c8" stroke-width="0.5"/><circle cx="7.3" cy="5.6" r="2.5" fill="#4a7fc0"/><circle cx="7.3" cy="5.6" r="1.1" fill="#1a1a2a"/><path d="M1 -1L13.5 11.5M13.5 -1L1 11.5" stroke="#e00000" stroke-width="2.3" fill="none"/></svg>
<div style="left:33px;top:756.6px;font-size:12px;line-height:16px;color:#000;white-space:nowrap;transform-origin:0 0;transform:scaleX(0.916);">MITTELLINIEN</div>
<div style="left:178px;top:755px;width:16px;height:16px;background:#0000ff;"></div>
<div style="left:212px;top:761px;width:5px;height:4px;background:#000;"></div>
<div style="left:218px;top:761px;width:4px;height:4px;background:#000;border-radius:2px;"></div>
<div style="left:223px;top:761px;width:5px;height:4px;background:#000;"></div>
<div style="left:251.5px;top:756.6px;font-size:12px;line-height:16px;color:#000;white-space:nowrap;transform-origin:0 0;transform:scaleX(0.921);">0.35</div>
<svg style="left:282px;top:757px;" width="14" height="14" viewBox="0 0 14 14"><path d="M1 6.5L4.8 10L13 1" stroke="#22dd22" stroke-width="2.2" fill="none"/></svg>
<svg style="left:316px;top:758px;" width="15" height="12" viewBox="0 0 15 12"><path d="M0.6 5.2C3 -0.2 11.4 -0.2 14 5.2" stroke="#3a2c2c" stroke-width="1.6" fill="none"/><path d="M2 5.8C4.4 9.4 10.4 9.4 12.8 5.8C10 2.6 4.8 2.6 2 5.8Z" fill="#f4f6f8" stroke="#c0c4c8" stroke-width="0.5"/><circle cx="7.3" cy="5.6" r="2.5" fill="#4a7fc0"/><circle cx="7.3" cy="5.6" r="1.1" fill="#1a1a2a"/></svg>
<div style="left:178px;top:774px;width:16px;height:4px;background:#000;"></div>
<div style="left:474px;top:465px;width:15px;height:313px;background:#f0f0f0;"></div>
<div style="left:474px;top:482px;width:15px;height:174px;background:#cdcdcd;"></div>
<svg style="left:477px;top:471px;" width="9" height="6" viewBox="0 0 9 6"><path d="M1.2 5L4.5 1.8L7.8 5" stroke="#444" stroke-width="2.1" fill="none"/></svg>
<svg style="left:477px;top:768px;" width="9" height="6" viewBox="0 0 9 6"><path d="M1.2 1L4.5 4.2L7.8 1" stroke="#444" stroke-width="2.1" fill="none"/></svg>
<div style="left:10px;top:815px;width:481px;height:182px;background:#fff;border:1px solid #5c5c5c;"></div>
<div style="left:11px;top:816px;width:16px;height:163px;background:#f0f0f0;"></div>
<div style="left:11px;top:980px;width:479px;height:16px;background:#f0f0f0;"></div>
<div style="left:28px;top:980px;width:103px;height:15px;background:#cdcdcd;"></div>
<svg style="left:16px;top:983px;" width="6" height="9" viewBox="0 0 6 9"><path d="M5 1.2L1.8 4.5L5 7.8" stroke="#444" stroke-width="2.1" fill="none"/></svg>
<svg style="left:479px;top:983px;" width="6" height="9" viewBox="0 0 6 9"><path d="M1 1.2L4.2 4.5L1 7.8" stroke="#444" stroke-width="2.1" fill="none"/></svg>
<div style="left:0px;top:1015px;width:197px;height:20px;border-top:1px solid #a0a0a0;border-right:1px solid #fff;border-bottom:1px solid #fff;"></div>
<div style="left:0px;top:1015px;width:1px;height:19px;background:#808080;"></div>
<div style="left:200px;top:1015px;width:1350px;height:20px;border-top:1px solid #a0a0a0;border-left:1px solid #a0a0a0;border-right:1px solid #fff;border-bottom:1px solid #fff;"></div>
<div style="left:2px;top:1017px;font-size:12px;line-height:16px;color:#000;white-space:nowrap;transform-origin:0 0;transform:scaleX(0.9869);">Übergangskörper</div>
<div style="left:202.5px;top:1017px;font-size:12px;line-height:16px;color:#000;white-space:nowrap;transform-origin:0 0;transform:scaleX(0.992);">&lt; ! @ # $ % ^ &amp; * &gt;</div>
<svg style="left:5px;top:46px;" width="18" height="21" viewBox="0 0 18 21"><defs><linearGradient id="gnew" x1="0" y1="0" x2="1" y2="1"><stop offset="0" stop-color="#f4f8ff"/><stop offset="0.6" stop-color="#d8e6f8"/><stop offset="1" stop-color="#c0d4f0"/></linearGradient></defs><path d="M0.8 0.8H9.5L16.8 8.2V20H0.8Z" fill="url(#gnew)" stroke="#46549a" stroke-width="1.1"/><path d="M9.5 0.8V8.2H16.8" fill="#f4f8fe" stroke="#46549a" stroke-width="1"/></svg>
<svg style="left:28px;top:46px;" width="20" height="21" viewBox="0 0 20 21"><defs><linearGradient id="gfo" x1="0" y1="0" x2="1" y2="0"><stop offset="0" stop-color="#f6e070"/><stop offset="0.6" stop-color="#f8d060"/><stop offset="1" stop-color="#f4b458"/></linearGradient></defs><path d="M0.3 9L4.8 6.2L7.5 7L6.5 20.4L1.6 20.4Z" fill="#f2b65a"/><path d="M5 9L11 6.5L13 8L12.5 12L5.5 15Z" fill="#f6c870"/><path d="M3.5 14.6L19.6 7.6L18 14L4.4 20.6Z" fill="url(#gfo)"/><path d="M6 1.8H12.6V8.6L10.6 6.6L8 10.2L5.6 8.2L8.3 4.6Z" fill="#1428c8"/><path d="M9 6.6L10.2 7.6L8.6 9.6Z" fill="#e8ecff"/></svg>
<svg style="left:52px;top:47px;" width="20" height="20" viewBox="0 0 20 20"><rect x="0.4" y="0.4" width="19.2" height="19.2" fill="#6b7d95"/><rect x="2.6" y="1.6" width="14.6" height="9.4" fill="#f8faff"/><rect x="5.4" y="13.2" width="9.6" height="6.4" fill="#eceff4"/><rect x="6.6" y="14.2" width="2" height="4" fill="#5a6a82"/></svg>
<svg style="left:256px;top:46px;" width="22" height="22" viewBox="0 0 22 22"><circle cx="11" cy="11" r="10.2" fill="#fff" stroke="#111" stroke-width="1.1"/><circle cx="11" cy="11" r="7.8" fill="#fff" stroke="#111" stroke-width="1.1"/><path d="M11 11V3.2A7.8 7.8 0 0 0 3.2 11Z" fill="#000"/><path d="M11 11V18.8A7.8 7.8 0 0 0 18.8 11Z" fill="#000"/></svg>
<svg style="left:366px;top:47px;" width="22" height="20" viewBox="0 0 22 20"><path d="M0.2 0.4L0.2 8.9L8.7 8.9L6.2 6.3C8 4 10 3.2 11.5 3.2C15 3.4 18 6.5 18 10.5C18 13.5 17.5 16 16.3 18.2L18 19.2C20 16.5 21.3 13.5 21.3 10.2C21.3 4.5 16.5 -0.3 11 -0.1C8 0 5.6 1.2 3.6 3.4Z" fill="#3c6088"/></svg>
<svg style="left:390px;top:47px;" width="22" height="20" viewBox="0 0 22 20"><g transform="translate(22,0) scale(-1,1)"><path d="M0.2 0.4L0.2 8.9L8.7 8.9L6.2 6.3C8 4 10 3.2 11.5 3.2C15 3.4 18 6.5 18 10.5C18 13.5 17.5 16 16.3 18.2L18 19.2C20 16.5 21.3 13.5 21.3 10.2C21.3 4.5 16.5 -0.3 11 -0.1C8 0 5.6 1.2 3.6 3.4Z" fill="#3c6088"/></g></svg>
<svg style="left:595px;top:46px;" width="22" height="22" viewBox="0 0 22 22"><path d="M1 5.5L2.2 3.2L7.5 2.2L9 4L16 3L16.5 16L2.5 19Z" fill="#f6c173"/><path d="M2.4 8L9 6L15.5 5.2" stroke="#fbe0b0" stroke-width="1.2" fill="none"/><g transform="translate(6.5,7) scale(0.72,0.66)"><path d="M10.3 0L20.6 4.6L10.6 12.3L0 6.8Z" fill="#1f5cb8"/><path d="M0.3 8.6L10.5 13L20.6 7L20.6 11.4L10.5 17L0.3 13Z" fill="#f2f5f9"/><path d="M0 13.4L10.5 17.4L20.6 11.8L20.6 16L10.5 21.9L0 17.6Z" fill="#e9683a"/></g></svg>
<svg style="left:619px;top:46px;" width="22" height="22" viewBox="0 0 22 22"><g transform="translate(0,1) scale(0.86,0.9)"><path d="M10.3 0L20.6 4.6L10.6 12.3L0 6.8Z" fill="#1f5cb8"/><path d="M0.3 8.6L10.5 13L20.6 7L20.6 11.4L10.5 17L0.3 13Z" fill="#f2f5f9"/><path d="M0 13.4L10.5 17.4L20.6 11.8L20.6 16L10.5 21.9L0 17.6Z" fill="#e9683a"/></g><g transform="translate(9,0)"><path d="M6 0.6C2.8 0.6 0.6 3 0.6 6.2C0.6 9 2.6 10.6 3.3 13L3.3 15H8.7L8.7 13C9.4 10.6 11.4 9 11.4 6.2C11.4 3 9.2 0.6 6 0.6Z" fill="#f4f000" stroke="#4a4a00" stroke-width="1"/><path d="M4.2 8L6 10.2L7.8 8M6 10.2V14.5" stroke="#6a7a00" stroke-width="1" fill="none"/><rect x="2.8" y="15" width="6.4" height="5.2" fill="#222"/><rect x="3.6" y="16.6" width="4.8" height="1.6" fill="#b8b8b8"/><path d="M4 20.2H8L7 21.6H5Z" fill="#111"/></g></svg>
<svg style="left:667px;top:46px;" width="21" height="22" viewBox="0 0 21 22"><path d="M10.3 0L20.6 4.6L10.6 12.3L0 6.8Z" fill="#1f5cb8"/><path d="M0.3 8.6L10.5 13L20.6 7L20.6 11.4L10.5 17L0.3 13Z" fill="#f2f5f9"/><path d="M0 13.4L10.5 17.4L20.6 11.8L20.6 16L10.5 21.9L0 17.6Z" fill="#e9683a"/></svg>
<svg style="left:769px;top:46px;" width="21" height="22" viewBox="0 0 21 22"><path d="M10.3 0L20.6 4.6L10.6 12.3L0 6.8Z" fill="#1f5cb8"/><path d="M0.3 8.6L10.5 13L20.6 7L20.6 11.4L10.5 17L0.3 13Z" fill="#f2f5f9"/><path d="M0 13.4L10.5 17.4L20.6 11.8L20.6 16L10.5 21.9L0 17.6Z" fill="#e9683a"/></svg>
<svg style="left:853px;top:46px;" width="21" height="22" viewBox="0 0 21 22"><path d="M10.3 0L20.6 4.6L10.6 12.3L0 6.8Z" fill="#1f5cb8"/><path d="M0.3 8.6L10.5 13L20.6 7L20.6 11.4L10.5 17L0.3 13Z" fill="#f2f5f9"/><path d="M0 13.4L10.5 17.4L20.6 11.8L20.6 16L10.5 21.9L0 17.6Z" fill="#e9683a"/></svg>
<svg style="left:989px;top:46px;" width="22" height="22" viewBox="0 0 22 22"><path d="M1 5.5L2.2 3.2L7.5 2.2L9 4L16 3L16.5 16L2.5 19Z" fill="#f6c173"/><path d="M2.4 8L9 6L15.5 5.2" stroke="#fbe0b0" stroke-width="1.2" fill="none"/><g transform="translate(8.5,9)"><g><circle cx="2.4" cy="1.6" r="1.4" fill="#e08a3a"/><rect x="0.8" y="3" width="3.4" height="9.5" rx="0.8" fill="#3f8fd0"/><circle cx="6.3" cy="1.2" r="1.4" fill="#e08a3a"/><rect x="4.6" y="2.6" width="3.4" height="10" rx="0.8" fill="#4a9ad8"/><circle cx="10.2" cy="1.6" r="1.4" fill="#e08a3a"/><rect x="8.5" y="3" width="3.4" height="9.5" rx="0.8" fill="#3f8fd0"/></g></g></svg>
<svg style="left:1013px;top:46px;" width="22" height="22" viewBox="0 0 22 22"><circle cx="4.5" cy="3.6" r="2" fill="#e08a3a"/><rect x="1.5" y="5.6" width="6" height="13" rx="1" fill="#3f8fd0"/><rect x="6" y="9" width="5" height="10" fill="#5a9ad0"/><g transform="translate(9.5,0)"><path d="M6 0.6C2.8 0.6 0.6 3 0.6 6.2C0.6 9 2.6 10.6 3.3 13L3.3 15H8.7L8.7 13C9.4 10.6 11.4 9 11.4 6.2C11.4 3 9.2 0.6 6 0.6Z" fill="#f4f000" stroke="#4a4a00" stroke-width="1"/><path d="M4.2 8L6 10.2L7.8 8M6 10.2V14.5" stroke="#6a7a00" stroke-width="1" fill="none"/><rect x="2.8" y="15" width="6.4" height="5.2" fill="#222"/><rect x="3.6" y="16.6" width="4.8" height="1.6" fill="#b8b8b8"/><path d="M4 20.2H8L7 21.6H5Z" fill="#111"/></g></svg>
<svg style="left:1311px;top:76px;" width="22" height="22" viewBox="0 0 22 22"><path d="M1 5.5L2.2 3.2L7.5 2.2L9 4L16 3L16.5 16L2.5 19Z" fill="#f6c173"/><path d="M2.4 8L9 6L15.5 5.2" stroke="#fbe0b0" stroke-width="1.2" fill="none"/><g transform="translate(8.5,9)"><g><circle cx="2.4" cy="1.6" r="1.4" fill="#e08a3a"/><rect x="0.8" y="3" width="3.4" height="9.5" rx="0.8" fill="#3f8fd0"/><circle cx="6.3" cy="1.2" r="1.4" fill="#e08a3a"/><rect x="4.6" y="2.6" width="3.4" height="10" rx="0.8" fill="#4a9ad8"/><circle cx="10.2" cy="1.6" r="1.4" fill="#e08a3a"/><rect x="8.5" y="3" width="3.4" height="9.5" rx="0.8" fill="#3f8fd0"/></g></g></svg>
<svg style="left:1336px;top:76px;" width="22" height="22" viewBox="0 0 22 22"><circle cx="4.5" cy="3.6" r="2" fill="#e08a3a"/><rect x="1.5" y="5.6" width="6" height="13" rx="1" fill="#3f8fd0"/><rect x="6" y="9" width="5" height="10" fill="#5a9ad0"/><g transform="translate(9.5,0)"><path d="M6 0.6C2.8 0.6 0.6 3 0.6 6.2C0.6 9 2.6 10.6 3.3 13L3.3 15H8.7L8.7 13C9.4 10.6 11.4 9 11.4 6.2C11.4 3 9.2 0.6 6 0.6Z" fill="#f4f000" stroke="#4a4a00" stroke-width="1"/><path d="M4.2 8L6 10.2L7.8 8M6 10.2V14.5" stroke="#6a7a00" stroke-width="1" fill="none"/><rect x="2.8" y="15" width="6.4" height="5.2" fill="#222"/><rect x="3.6" y="16.6" width="4.8" height="1.6" fill="#b8b8b8"/><path d="M4 20.2H8L7 21.6H5Z" fill="#111"/></g></svg>
<svg style="left:15px;top:125px;" width="15" height="17" viewBox="0 0 15 17"><path d="M6 1.5L11 4.5V9L6 6Z" fill="#f2e9a0" stroke="#b0a050" stroke-width="0.6"/><circle cx="4.6" cy="7.6" r="3.4" fill="#e8f0f4" stroke="#9aa6a8" stroke-width="1.2"/><path d="M7 4L10 8.5V12.2L8 11.2L11.6 15.6L14 11.8L12 12.4V7Z" fill="#d8d800" stroke="#5a5a00" stroke-width="0.7"/></svg>
<svg style="left:81px;top:126px;" width="13" height="11" viewBox="0 0 21 22"><path d="M10.3 0L20.6 4.6L10.6 12.3L0 6.8Z" fill="#1f5cb8"/><path d="M0.3 8.6L10.5 13L20.6 7L20.6 11.4L10.5 17L0.3 13Z" fill="#f2f5f9"/><path d="M0 13.4L10.5 17.4L20.6 11.8L20.6 16L10.5 21.9L0 17.6Z" fill="#e9683a"/></svg>
<svg style="left:34px;top:147px;" width="14" height="14" viewBox="0 0 21 22"><path d="M10.3 0L20.6 4.6L10.6 12.3L0 6.8Z" fill="#1f5cb8"/><path d="M0.3 8.6L10.5 13L20.6 7L20.6 11.4L10.5 17L0.3 13Z" fill="#f2f5f9"/><path d="M0 13.4L10.5 17.4L20.6 11.8L20.6 16L10.5 21.9L0 17.6Z" fill="#e9683a"/></svg>
<svg style="left:16px;top:490px;" width="14" height="14" viewBox="0 0 21 22"><path d="M10.3 0L20.6 4.6L10.6 12.3L0 6.8Z" fill="#1f5cb8"/><path d="M0.3 8.6L10.5 13L20.6 7L20.6 11.4L10.5 17L0.3 13Z" fill="#f2f5f9"/><path d="M0 13.4L10.5 17.4L20.6 11.8L20.6 16L10.5 21.9L0 17.6Z" fill="#e9683a"/></svg>
<svg style="left:16px;top:509px;" width="14" height="14" viewBox="0 0 21 22"><path d="M10.3 0L20.6 4.6L10.6 12.3L0 6.8Z" fill="#1f5cb8"/><path d="M0.3 8.6L10.5 13L20.6 7L20.6 11.4L10.5 17L0.3 13Z" fill="#f2f5f9"/><path d="M0 13.4L10.5 17.4L20.6 11.8L20.6 16L10.5 21.9L0 17.6Z" fill="#e9683a"/></svg>
<svg style="left:16px;top:528px;" width="14" height="14" viewBox="0 0 21 22"><path d="M10.3 0L20.6 4.6L10.6 12.3L0 6.8Z" fill="#1f5cb8"/><path d="M0.3 8.6L10.5 13L20.6 7L20.6 11.4L10.5 17L0.3 13Z" fill="#f2f5f9"/><path d="M0 13.4L10.5 17.4L20.6 11.8L20.6 16L10.5 21.9L0 17.6Z" fill="#e9683a"/></svg>
<svg style="left:16px;top:547px;" width="14" height="14" viewBox="0 0 21 22"><path d="M10.3 0L20.6 4.6L10.6 12.3L0 6.8Z" fill="#1f5cb8"/><path d="M0.3 8.6L10.5 13L20.6 7L20.6 11.4L10.5 17L0.3 13Z" fill="#f2f5f9"/><path d="M0 13.4L10.5 17.4L20.6 11.8L20.6 16L10.5 21.9L0 17.6Z" fill="#e9683a"/></svg>
<svg style="left:16px;top:566px;" width="14" height="14" viewBox="0 0 21 22"><path d="M10.3 0L20.6 4.6L10.6 12.3L0 6.8Z" fill="#1f5cb8"/><path d="M0.3 8.6L10.5 13L20.6 7L20.6 11.4L10.5 17L0.3 13Z" fill="#f2f5f9"/><path d="M0 13.4L10.5 17.4L20.6 11.8L20.6 16L10.5 21.9L0 17.6Z" fill="#e9683a"/></svg>
<svg style="left:16px;top:585px;" width="14" height="14" viewBox="0 0 21 22"><path d="M10.3 0L20.6 4.6L10.6 12.3L0 6.8Z" fill="#1f5cb8"/><path d="M0.3 8.6L10.5 13L20.6 7L20.6 11.4L10.5 17L0.3 13Z" fill="#f2f5f9"/><path d="M0 13.4L10.5 17.4L20.6 11.8L20.6 16L10.5 21.9L0 17.6Z" fill="#e9683a"/></svg>
<svg style="left:16px;top:642px;" width="14" height="14" viewBox="0 0 21 22"><path d="M10.3 0L20.6 4.6L10.6 12.3L0 6.8Z" fill="#1f5cb8"/><path d="M0.3 8.6L10.5 13L20.6 7L20.6 11.4L10.5 17L0.3 13Z" fill="#f2f5f9"/><path d="M0 13.4L10.5 17.4L20.6 11.8L20.6 16L10.5 21.9L0 17.6Z" fill="#e9683a"/></svg>
<svg style="left:16px;top:604px;" width="15" height="15" viewBox="0 0 15 15"><path d="M0.8 0.5V14.2M13.6 1.5V14.2M0.8 5.6H13.6" stroke="#000" stroke-width="1.1" fill="none"/><path d="M2 0.4L8.6 4.4L6.4 7L12.2 13.2L9.6 14L3.4 7.8L5.6 5.4L1.6 2.4Z" fill="#f0e820" stroke="#8a8a00" stroke-width="0.5"/></svg>
<svg style="left:16px;top:623px;" width="15" height="15" viewBox="0 0 15 15"><path d="M1 0.8H8.5L11 3.5V13.5H1Z" fill="#fff" stroke="#5a78c0" stroke-width="0.9"/><path d="M6.5 8.5L11.5 3L13.5 4.8L8.5 10.2L6 10.8Z" fill="#2060c0"/></svg>
<svg style="left:16px;top:661px;" width="15" height="14" viewBox="0 0 15 14"><rect x="0.6" y="4.4" width="9" height="3" fill="#fff" stroke="#a000a0" stroke-width="1.2"/><path d="M9.6 1.5H13V11H9.6ZM9.6 4.4H13M9.6 7.4H13" fill="#fff" stroke="#000" stroke-width="1"/></svg>
<svg style="left:16px;top:679px;" width="16" height="16" viewBox="0 0 16 16"><text x="0" y="6.5" font-family="Liberation Sans" font-weight="bold" font-size="8" fill="#000">H</text><path d="M1 14.5L2.5 10.5L11 2.5L13.5 5L5 13Z" fill="#2a7a50" stroke="#1a4a30" stroke-width="0.5"/><path d="M1 14.5L2.5 10.5L5 13Z" fill="#f0d8b0"/></svg>
<svg style="left:16px;top:698px;" width="15" height="16" viewBox="0 0 15 16"><path d="M2.5 4.5V15M12.5 4.5V15" stroke="#000" stroke-width="1.1" fill="none"/><path d="M0 7.5H15" stroke="#000" stroke-width="1.1"/><path d="M1.2 9L3.8 6M11.2 9L13.8 6" stroke="#000" stroke-width="0.9"/><text x="4.4" y="4.6" font-family="Liberation Sans" font-size="5.5" font-weight="bold" fill="#000">10</text></svg>
<svg style="left:16px;top:717px;" width="15" height="16" viewBox="0 0 15 16"><path d="M2.5 6V15M12.5 6V15" stroke="#20c020" stroke-width="1.2" fill="none"/><path d="M0 8C4 5.8 11 5.8 15 8" stroke="#000" stroke-width="1.1" fill="none"/><path d="M1.2 9L3.8 6M11.2 9L13.8 6" stroke="#000" stroke-width="0.9"/><text x="4.4" y="4.6" font-family="Liberation Sans" font-size="5.5" font-weight="bold" fill="#000">10</text></svg>
<svg style="left:16px;top:736px;" width="15" height="16" viewBox="0 0 15 16"><path d="M2.5 4.5V15M12.5 4.5V15" stroke="#000" stroke-width="1.1" fill="none"/><path d="M0 7.5H15" stroke="#000" stroke-width="1.1"/><path d="M1.2 9L3.8 6M11.2 9L13.8 6" stroke="#000" stroke-width="0.9"/><text x="4.4" y="4.6" font-family="Liberation Sans" font-size="5.5" font-weight="bold" fill="#30d030">10</text></svg>
<svg style="left:16px;top:756px;" width="15" height="15" viewBox="0 0 15 15"><path d="M0.4 7.5H14.6M7.5 0.4V14.6" stroke="#2828d8" stroke-width="1.6" stroke-dasharray="1.7 1.5" fill="none"/><circle cx="7.5" cy="7.5" r="2.1" fill="#2828d8"/></svg>
<div style="left:16px;top:775px;width:14px;height:4px;background:#f4f4f4;border:1px solid #555;border-bottom:none;"></div>
<div style="left:18px;top:777px;width:10px;height:1px;background:#777;"></div>
<svg style="left:12px;top:787px;" width="24" height="24" viewBox="0 0 24 24"><defs><linearGradient id="gfun" x1="0" y1="0" x2="1" y2="0"><stop offset="0" stop-color="#f8e040"/><stop offset="0.55" stop-color="#f4f000"/><stop offset="0.85" stop-color="#90a800"/><stop offset="1" stop-color="#404800"/></linearGradient></defs><path d="M1.5 1H23L12.5 12.5Z" fill="url(#gfun)"/><path d="M11.4 6.5H13.4V12L12.9 22H11.9L11.4 12Z" fill="#9a9a9a"/><path d="M12.4 14L10.5 22.5" stroke="#222" stroke-width="0.9"/><path d="M1.5 5L22 22.5M22.5 4L1.5 22.5" stroke="#e4104c" stroke-width="3" fill="none"/></svg>
<svg style="left:41px;top:787px;" width="17" height="24" viewBox="0 0 17 24"><defs><linearGradient id="gbk" x1="0" y1="0" x2="1" y2="0"><stop offset="0" stop-color="#c4c8c8"/><stop offset="0.35" stop-color="#fbfbfb"/><stop offset="0.75" stop-color="#e4e6e6"/><stop offset="1" stop-color="#a8acac"/></linearGradient></defs><path d="M1 9.5C1 7.6 13 7.6 13 9.5V20.6C13 22.8 1 22.8 1 20.6Z" fill="url(#gbk)"/><ellipse cx="7" cy="9.5" rx="6" ry="1.7" fill="#eef4f8" stroke="#b8bcbc" stroke-width="0.5"/><path d="M15.8 4.2C14.5 1.2 11 1.4 9 4.6L7.4 7.4" stroke="#1c5c9c" stroke-width="2.2" fill="none"/><path d="M5.4 4.8L6 10.2L10.8 7.6Z" fill="#1c5c9c"/></svg>
<svg style="left:8px;top:93px;" width="22" height="22" viewBox="0 0 22 22"><defs><linearGradient id="gred" x1="0" y1="0" x2="0" y2="1"><stop offset="0" stop-color="#e89088"/><stop offset="0.5" stop-color="#d85048"/><stop offset="1" stop-color="#c03028"/></linearGradient><linearGradient id="gpk" x1="0" y1="0" x2="0" y2="1"><stop offset="0" stop-color="#d8c4c4"/><stop offset="0.55" stop-color="#f0e8e8"/><stop offset="1" stop-color="#fff"/></linearGradient></defs><rect x="0.5" y="0.5" width="21" height="21" rx="3" fill="url(#gred)"/><rect x="2.6" y="2.6" width="16.8" height="16" rx="1.5" fill="url(#gpk)"/><path d="M5 6.5H16V12C16 14 14 15 11.5 15H8.5C6.5 15 5 14 5 12Z" fill="#b4b4b4" stroke="#9a9a9a" stroke-width="0.8"/><path d="M6.5 8.5C8 7.5 14 7.5 15 9.5V12C13.5 13.5 8.5 13.5 6.5 12Z" fill="#d4d4d4"/></svg>
<svg style="left:32px;top:93px;" width="22" height="22" viewBox="0 0 22 22"><path d="M1 2.5L2 1.2H5L6 2.2H10.5V8H1Z" fill="#e8c860" stroke="#d0a838" stroke-width="0.5"/><path d="M10 14.5L11 13.2H14L15 14.2H19.5V20H10Z" fill="#e8c860" stroke="#d0a838" stroke-width="0.5"/><path d="M11 4H16V9.5H18L14.8 13.5L11.6 9.5H13.6V6.4H11Z" fill="#1030d0"/></svg>
<svg style="left:57px;top:94px;" width="21" height="21" viewBox="0 0 21 21"><circle cx="9.5" cy="10" r="8.6" fill="none" stroke="#111" stroke-width="1.2"/><path d="M4.5 6.5H14" stroke="#5a80c0" stroke-width="1.3"/><path d="M4 6.5L8 4.3V8.7Z" fill="#111"/><rect x="12" y="13.4" width="6.4" height="6.4" fill="none" stroke="#d81828" stroke-width="0.9"/><path d="M10.8 16.6H19.6M15.2 12.2V21" stroke="#d81828" stroke-width="0.6"/><circle cx="15.2" cy="16.6" r="1" fill="#222"/></svg>
<svg style="left:81px;top:94px;" width="20" height="20" viewBox="0 0 20 20"><path d="M0.8 19.2L2.6 13.4L14.6 0.6L19.2 4.6L7.4 17.6Z" fill="#5c5c5c"/><path d="M14.6 0.6L16.4 2.2L4.6 15L2.6 13.4Z" fill="#8c8c8c"/><path d="M17.6 3.2L19.2 4.6L7.4 17.6L5.8 16.2Z" fill="#444"/><path d="M0.8 19.2L2.6 13.4L7.4 17.6Z" fill="#f4f4f4" stroke="#777" stroke-width="0.5"/><path d="M0.8 19.2L1.7 16.6L3.2 18Z" fill="#222"/></svg>
<svg style="left:105px;top:94px;" width="20" height="20" viewBox="0 0 20 20"><path d="M0.8 1H8.8L13.6 5.6V18.4H0.8Z" fill="#fff" stroke="#8a8a8a" stroke-width="0.9"/><path d="M8.8 1V5.6H13.6" fill="none" stroke="#8a8a8a" stroke-width="0.8"/><g transform="translate(6,3) scale(0.66)"><path d="M0.8 19.2L2.6 13.4L14.6 0.6L19.2 4.6L7.4 17.6Z" fill="#5c5c5c"/><path d="M14.6 0.6L16.4 2.2L4.6 15L2.6 13.4Z" fill="#8c8c8c"/><path d="M17.6 3.2L19.2 4.6L7.4 17.6L5.8 16.2Z" fill="#444"/><path d="M0.8 19.2L2.6 13.4L7.4 17.6Z" fill="#f4f4f4" stroke="#777" stroke-width="0.5"/><path d="M0.8 19.2L1.7 16.6L3.2 18Z" fill="#222"/></g></svg>
<svg style="left:128px;top:93px;" width="21" height="22" viewBox="0 0 21 22"><text x="0.6" y="7.8" font-family="Liberation Sans" font-weight="bold" font-size="9.5" fill="#000">H</text><g transform="translate(1.4,1.4)"><path d="M0.8 19.2L2.6 13.4L14.6 0.6L19.2 4.6L7.4 17.6Z" fill="#333"/><path d="M14.6 0.6L16.4 2.2L4.6 15L2.6 13.4Z" fill="#5e5e5e"/><path d="M17.6 3.2L19.2 4.6L7.4 17.6L5.8 16.2Z" fill="#1c1c1c"/><path d="M0.8 19.2L2.6 13.4L7.4 17.6Z" fill="#f4f4f4" stroke="#777" stroke-width="0.5"/><path d="M0.8 19.2L1.7 16.6L3.2 18Z" fill="#222"/></g></svg>
<svg style="left:153px;top:94px;" width="21" height="20" viewBox="0 0 21 20"><defs><pattern id="ph" width="3.5" height="3.5" patternUnits="userSpaceOnUse" patternTransform="rotate(-45)"><rect width="3.5" height="3.5" fill="#fff"/><rect width="3.5" height="1" fill="#777"/></pattern></defs><rect x="0.6" y="0.6" width="19" height="18.6" fill="#fff" stroke="#555" stroke-width="1.1"/><rect x="1.2" y="1.2" width="17.8" height="5.6" fill="url(#ph)"/><rect x="1.2" y="13" width="17.8" height="5.6" fill="url(#ph)"/><path d="M0.6 7H19.6M0.6 13H19.6" stroke="#555" stroke-width="1"/></svg>
<svg style="left:178px;top:94px;" width="18" height="20" viewBox="0 0 18 20"><path d="M0.8 0.8V19.4M16.8 0.8V19.4" stroke="#555" stroke-width="1.2"/><path d="M0.8 5.6H5M12.8 5.6H16.8" stroke="#555" stroke-width="1"/><path d="M3 0.8L11 5.4L7 7.6L15.6 17.4L13.4 18.4L3.6 8.4L7.6 6L2.4 2Z" fill="#9c9c9c" stroke="#666" stroke-width="0.6"/></svg>
<svg style="left:201px;top:94px;" width="20" height="20" viewBox="0 0 20 20"><path d="M0 10H20M10 0V20" stroke="#7a7a7a" stroke-width="1.7" stroke-dasharray="2.4 1.3" fill="none"/></svg>
<svg style="left:225px;top:99px;" width="20" height="10" viewBox="0 0 20 10"><path d="M0.5 1H10V8.6H20" stroke="#7a7a7a" stroke-width="1.7" stroke-dasharray="2.4 1.5" fill="none"/></svg>
<svg style="left:249px;top:94px;" width="20" height="20" viewBox="0 0 20 20"><path d="M0.6 6.6H13.4V19.4H0.6ZM6.6 0.6H19.4V13.4H6.6ZM0.6 6.6L6.6 0.6M13.4 6.6L19.4 0.6M0.6 19.4L6.6 13.4M13.4 19.4L19.4 13.4" stroke="#666" stroke-width="0.9" fill="none"/></svg>
<svg style="left:272px;top:96px;" width="22" height="16" viewBox="0 0 22 16"><rect x="0.6" y="3.6" width="15.8" height="8" fill="#f6f6f6" stroke="#777" stroke-width="1"/><path d="M0.6 6.2H16M0.6 9H16" stroke="#999" stroke-width="0.8"/><rect x="16.4" y="0.6" width="4.2" height="14.2" fill="#f6f6f6" stroke="#777" stroke-width="1"/><path d="M16.4 5.2H20.6M16.4 10.2H20.6" stroke="#777" stroke-width="0.8"/></svg>
<svg style="left:296px;top:93px;" width="21" height="22" viewBox="0 0 21 22"><path d="M1 10.4L10.6 0.8L20.2 6.4V16.6L11.4 21.4L1 16.6Z" fill="#f4f4f4" stroke="#222" stroke-width="1.2"/><path d="M7 4.2L14.6 8C12.4 10.4 11.6 14 11.4 21.4M14.6 8L20.2 6.4M1 12L10.8 16.6" stroke="#222" stroke-width="1.1" fill="none"/></svg>
<svg style="left:321px;top:94px;" width="21" height="21" viewBox="0 0 21 21"><rect x="0.5" y="1.0" width="4" height="4" fill="#e09050" stroke="#7a88b0" stroke-width="0.8"/><rect x="7.2" y="2.2" width="2" height="2" fill="#000"/><rect x="11.6" y="2.2" width="2" height="2" fill="#000"/><rect x="15.6" y="2.2" width="4.4" height="2" fill="#000"/><rect x="0.5" y="8.2" width="4" height="4" fill="#e09050" stroke="#7a88b0" stroke-width="0.8"/><rect x="7.2" y="9.399999999999999" width="2" height="2" fill="#000"/><rect x="11.6" y="9.399999999999999" width="2" height="2" fill="#000"/><rect x="15.6" y="9.399999999999999" width="4.4" height="2" fill="#000"/><rect x="0.5" y="15.4" width="4" height="4" fill="#e09050" stroke="#7a88b0" stroke-width="0.8"/><rect x="7.2" y="16.6" width="2" height="2" fill="#000"/><rect x="11.6" y="16.6" width="2" height="2" fill="#000"/><rect x="15.6" y="16.6" width="4.4" height="2" fill="#000"/></svg>
<svg style="left:507px;top:76px;" width="19" height="22" viewBox="0 0 19 22"><path d="M1 5.5L8 1.5L15 3.5V16L8 20.5L1 17.5Z" fill="#b4aeae"/><path d="M1 5.5L9.5 1L15 3.5L7 8Z" fill="#5e6660"/><path d="M6 7.5L8.5 6.5V20L6 19Z" fill="#c02020"/><path d="M8.5 7L15 3.5V9L11 10.5V13L8.5 14Z" fill="#d02828"/><path d="M9 9L17.5 5V17.5L9 21.5Z" fill="#fff" fill-opacity="0.75" stroke="#c8a0a0" stroke-width="0.8"/></svg>
<svg style="left:540px;top:76px;" width="20" height="22" viewBox="0 0 20 22"><path d="M1.5 5L11.5 0.6V15L1.5 19.5Z" fill="none" stroke="#e09898" stroke-width="0.7"/><path d="M7 9L19 4V17L7 22Z" fill="#b8b8b8" stroke="#888" stroke-width="0.8"/></svg>
<svg style="left:675px;top:76px;" width="21" height="22" viewBox="0 0 21 22"><path d="M1 6L13.5 0.8V15.5L1 20.8Z" fill="none" stroke="#6a7090" stroke-width="0.9"/><g transform="translate(11,7.5) scale(0.72,0.66)"><path d="M6 0.6C2.8 0.6 0.6 3 0.6 6.2C0.6 9 2.6 10.6 3.3 13L3.3 15H8.7L8.7 13C9.4 10.6 11.4 9 11.4 6.2C11.4 3 9.2 0.6 6 0.6Z" fill="#f4f000" stroke="#4a4a00" stroke-width="1"/><path d="M4.2 8L6 10.2L7.8 8M6 10.2V14.5" stroke="#6a7a00" stroke-width="1" fill="none"/><rect x="2.8" y="15" width="6.4" height="5.2" fill="#222"/><rect x="3.6" y="16.6" width="4.8" height="1.6" fill="#b8b8b8"/><path d="M4 20.2H8L7 21.6H5Z" fill="#111"/></g></svg>
<svg style="left:700px;top:76px;" width="24" height="22" viewBox="0 0 24 22"><path d="M1 6L13.5 0.8V15.5L1 20.8Z" fill="none" stroke="#6a7090" stroke-width="0.9"/><path d="M1 13L13.5 8" stroke="#e07070" stroke-width="0.9"/><path d="M14 1.5C18 0.5 21 5 18.5 8.5C16.5 11 20 13 22.5 11.5" stroke="#1a1f4a" stroke-width="1.7" fill="none"/><path d="M16.5 9.5L20 8.2L19.8 11.4Z" fill="#1a1f4a"/></svg>
<svg style="left:738px;top:75px;" width="24" height="23" viewBox="0 0 24 23"><g transform="translate(0,2)"><path d="M1 6L13.5 0.8V15.5L1 20.8Z" fill="none" stroke="#555a78" stroke-width="0.9"/></g><path d="M12 9L18.5 1.5L23 4.5L16.5 12.5Z" fill="#4a90d0"/><path d="M12 9L15 5.5L19.5 8.8L16.5 12.5Z" fill="#e81818"/></svg>
<svg style="left:765px;top:76px;" width="21" height="22" viewBox="0 0 21 22"><path d="M1 6L13.5 0.8V15.5L1 20.8Z" fill="none" stroke="#e8a0a8" stroke-width="0.9"/><path d="M1 13L13.5 8" stroke="#e8a0a8" stroke-width="0.7"/><text x="11.5" y="21.3" font-family="Liberation Sans" font-weight="bold" font-size="11.5" fill="#000">E</text></svg>
<div style="left:790px;top:75px;width:23px;height:23px;border:1px solid #a0a0a0;border-right-color:#fff;border-bottom-color:#fff;"></div>
<svg style="left:792px;top:77px;" width="20" height="20" viewBox="0 0 20 20"><defs><radialGradient id="gg2D" cx="0.5" cy="0.25" r="0.75"><stop offset="0" stop-color="#a0ff70"/><stop offset="0.45" stop-color="#38e018"/><stop offset="1" stop-color="#1a9a08"/></radialGradient></defs><circle cx="10" cy="10" r="9.8" fill="url(#gg2D)"/><ellipse cx="10" cy="4.6" rx="6.4" ry="3" fill="#d8ffc0" opacity="0.55"/><text x="10" y="15" text-anchor="middle" font-family="Liberation Sans" font-weight="bold" font-size="12.5" fill="#0a2a0a" stroke="#0a2a0a" stroke-width="0.5">2D</text></svg>
<div style="left:814px;top:75px;width:23px;height:23px;border:1px solid #a0a0a0;border-right-color:#fff;border-bottom-color:#fff;"></div>
<svg style="left:816px;top:77px;" width="20" height="20" viewBox="0 0 20 20"><defs><radialGradient id="gg3D" cx="0.5" cy="0.25" r="0.75"><stop offset="0" stop-color="#a0ff70"/><stop offset="0.45" stop-color="#38e018"/><stop offset="1" stop-color="#1a9a08"/></radialGradient></defs><circle cx="10" cy="10" r="9.8" fill="url(#gg3D)"/><ellipse cx="10" cy="4.6" rx="6.4" ry="3" fill="#d8ffc0" opacity="0.55"/><text x="10" y="15" text-anchor="middle" font-family="Liberation Sans" font-weight="bold" font-size="12.5" fill="#0a2a0a" stroke="#0a2a0a" stroke-width="0.5">3D</text></svg>
<svg style="left:843px;top:76px;" width="22" height="22" viewBox="0 0 22 22"><ellipse cx="11" cy="11" rx="9.6" ry="4.2" fill="none" stroke="#111" stroke-width="1.5"/><ellipse cx="11.5" cy="11" rx="4.6" ry="9.8" fill="none" stroke="#111" stroke-width="1.5" transform="rotate(-12 11 11)"/><path d="M5 1L9.5 3.2L5.2 5Z M9 10.5L12.5 12.3L9 14.3Z" fill="#111"/></svg>
<svg style="left:867px;top:76px;" width="22" height="22" viewBox="0 0 22 22"><path d="M1 7L9 1.5L17 5V17L8 21.5L1 18Z" fill="#c8d0d0"/><path d="M1 7L9 1.5L17 5L8.5 10Z" fill="#5a5a5a"/><path d="M8.5 10L17 5V17L8 21.5Z" fill="#30d848"/><circle cx="11.5" cy="12.5" r="3.6" fill="#e4e4e0" fill-opacity="0.9" stroke="#6a6a78" stroke-width="1.2"/><path d="M14.6 15.4L20.5 21" stroke="#c89058" stroke-width="2.4" stroke-linecap="round"/><path d="M14.6 15.4L20.5 21" stroke="#7a5a38" stroke-width="0.6" transform="translate(0.9,-0.9)"/></svg>
<svg style="left:890px;top:76px;" width="23" height="22" viewBox="0 0 23 22"><rect x="1" y="0.8" width="16" height="15.4" fill="#eceef4" stroke="#5a5a78" stroke-width="1.3"/><circle cx="9.5" cy="8" r="4.4" fill="#e4e4e0" fill-opacity="0.9" stroke="#6a6a78" stroke-width="1.2"/><path d="M13.0 11.6L21 20" stroke="#c89058" stroke-width="2.4" stroke-linecap="round"/><path d="M13.0 11.6L21 20" stroke="#7a5a38" stroke-width="0.6" transform="translate(0.9,-0.9)"/></svg>
<svg style="left:918px;top:76px;" width="17" height="23" viewBox="0 0 17 23"><path d="M4.2 12.5V4.2C4.2 2.4 6.6 2.4 6.6 4.2V2.2C6.6 0.4 9 0.4 9 2.2V3C9 1.4 11.4 1.4 11.4 3V5C11.4 3.6 13.8 3.6 13.8 5V14.5C13.8 17.5 12 19.5 9 19.5H7C4.5 19.5 3.5 18 2 15.5L0.8 12.8C0.4 11.2 2.4 10.6 3.2 12Z" fill="#fff" stroke="#111" stroke-width="1.1"/><path d="M6.6 4V10.5M9 3V10.5M11.4 4.5V10.5" stroke="#111" stroke-width="0.9"/><rect x="3.5" y="20.2" width="9.5" height="2.2" fill="#0808c8"/></svg>
<svg style="left:941px;top:76px;" width="20" height="22" viewBox="0 0 20 22"><g transform="translate(0.5,0.5) scale(0.82,0.78)"><path d="M0.2 0.4L0.2 8.9L8.7 8.9L6.2 6.3C8 4 10 3.2 11.5 3.2C15 3.4 18 6.5 18 10.5C18 13.5 17.5 16 16.3 18.2L19.4 19.2C21 16.5 22 13.5 22 10.2C22 4.5 16.5 -0.3 11 -0.1C8 0 5.6 1.2 3.6 3.4Z" fill="#3c6a90"/></g><circle cx="6.5" cy="10.5" r="4.2" fill="#e4e4e0" fill-opacity="0.9" stroke="#6a6a78" stroke-width="1.2"/><path d="M9.9 13.9L16.5 20.5" stroke="#c89058" stroke-width="2.4" stroke-linecap="round"/><path d="M9.9 13.9L16.5 20.5" stroke="#7a5a38" stroke-width="0.6" transform="translate(0.9,-0.9)"/></svg>
<svg style="left:963px;top:76px;" width="21" height="22" viewBox="0 0 21 22"><g transform="translate(20.5,0) scale(-1,1)"><g transform="translate(0.5,0.5) scale(0.82,0.78)"><path d="M0.2 0.4L0.2 8.9L8.7 8.9L6.2 6.3C8 4 10 3.2 11.5 3.2C15 3.4 18 6.5 18 10.5C18 13.5 17.5 16 16.3 18.2L19.4 19.2C21 16.5 22 13.5 22 10.2C22 4.5 16.5 -0.3 11 -0.1C8 0 5.6 1.2 3.6 3.4Z" fill="#3c6a90"/></g></g><circle cx="13.5" cy="10.5" r="4.2" fill="#e4e4e0" fill-opacity="0.9" stroke="#6a6a78" stroke-width="1.2"/><path d="M10.0 13.8L3 20.5" stroke="#c89058" stroke-width="2.4" stroke-linecap="round"/><path d="M10.0 13.8L3 20.5" stroke="#7a5a38" stroke-width="0.6" transform="translate(0.9,-0.9)"/></svg>
<svg style="left:986px;top:76px;" width="24" height="23" viewBox="0 0 24 23"><path d="M11.5 0L16 4.5H7ZM11.5 22L16 17.5H7ZM0 11L4.8 6.2V15.8ZM23 11L18.2 6.2V15.8Z" fill="#3c6a90"/><circle cx="11.5" cy="10.5" r="5.6" fill="#e4e4e0" stroke="#6a6a78" stroke-width="1.2"/><path d="M16 15L21.5 20.5" stroke="#c89058" stroke-width="2.4" stroke-linecap="round"/></svg>
<svg style="left:1011px;top:76px;" width="22" height="22" viewBox="0 0 22 22"><path d="M1 1H11.5L18 7V15.5H1Z" fill="#f0f0fa" stroke="#2a2a88" stroke-width="1.3"/><path d="M11.5 1V7H18" fill="none" stroke="#2a2a88" stroke-width="1"/><circle cx="10" cy="10.5" r="4" fill="#e4e4e0" fill-opacity="0.9" stroke="#6a6a78" stroke-width="1.2"/><path d="M13.3 13.8L20 20.5" stroke="#c89058" stroke-width="2.4" stroke-linecap="round"/><path d="M13.3 13.8L20 20.5" stroke="#7a5a38" stroke-width="0.6" transform="translate(0.9,-0.9)"/></svg>
<svg style="left:1035px;top:76px;" width="21" height="22" viewBox="0 0 21 22"><rect x="1" y="1.2" width="17.5" height="5" fill="#b8ecf0" stroke="#98d0d8" stroke-width="0.6"/><path d="M18.5 3.5H20V10H11.5V13" stroke="#8a8a8a" stroke-width="1.3" fill="none"/><rect x="10.4" y="12.5" width="2.2" height="9" fill="#8a4a2a"/></svg>
<svg style="left:1058px;top:76px;" width="24" height="22" viewBox="0 0 24 22"><defs><radialGradient id="gyc" cx="0.5" cy="0.3" r="0.5"><stop offset="0" stop-color="#f8f800"/><stop offset="0.5" stop-color="#c8c830"/><stop offset="1" stop-color="#8a8a80" stop-opacity="0"/></radialGradient></defs><path d="M1 5.5L11.5 0.5L22.5 5V17L11.5 22L1 17Z" fill="#9a9a98"/><path d="M1 5.5L11.5 10L22.5 5L11.5 0.5Z" fill="#b8b8b0"/><path d="M11.5 10V22L22.5 17V5Z" fill="#7a7a78"/><ellipse cx="11.5" cy="7.5" rx="7" ry="6" fill="url(#gyc)"/></svg>
<svg style="left:1097px;top:76px;overflow:hidden;" width="21" height="21" viewBox="0 0 21 21"><path d="M-28 0L-7 21M-28 0L-49 21" stroke="#000" stroke-width="1.15"/><path d="M-21 0L0 21M-21 0L-42 21" stroke="#000" stroke-width="1.15"/><path d="M-14 0L7 21M-14 0L-35 21" stroke="#000" stroke-width="1.15"/><path d="M-7 0L14 21M-7 0L-28 21" stroke="#000" stroke-width="1.15"/><path d="M0 0L21 21M0 0L-21 21" stroke="#000" stroke-width="1.15"/><path d="M7 0L28 21M7 0L-14 21" stroke="#000" stroke-width="1.15"/><path d="M14 0L35 21M14 0L-7 21" stroke="#000" stroke-width="1.15"/><path d="M21 0L42 21M21 0L0 21" stroke="#000" stroke-width="1.15"/><path d="M28 0L49 21M28 0L7 21" stroke="#000" stroke-width="1.15"/><path d="M35 0L56 21M35 0L14 21" stroke="#000" stroke-width="1.15"/><path d="M42 0L63 21M42 0L21 21" stroke="#000" stroke-width="1.15"/><path d="M49 0L70 21M49 0L28 21" stroke="#000" stroke-width="1.15"/></svg>
<svg style="left:1123px;top:77px;" width="19" height="19" viewBox="0 0 19 19"><defs><radialGradient id="ggs" cx="0.5" cy="0.5" r="0.5"><stop offset="0" stop-color="#9a9a9a"/><stop offset="0.7" stop-color="#707070"/><stop offset="1" stop-color="#5a5a5a"/></radialGradient></defs><circle cx="9.2" cy="9.2" r="9" fill="url(#ggs)"/></svg>
<svg style="left:1157px;top:80px;" width="9" height="9" viewBox="0 0 9 9"><path d="M4.5 0L5.6 3.2H9L6.3 5.2L7.3 8.6L4.5 6.5L1.7 8.6L2.7 5.2L0 3.2H3.4Z" fill="#8a8a8a"/></svg>
<svg style="left:0;top:0;" width="0" height="0"><defs><radialGradient id="sb" cx="0.34" cy="0.68" r="0.75"><stop offset="0" stop-color="#4a9ae8"/><stop offset="0.35" stop-color="#17529c"/><stop offset="1" stop-color="#04204a"/></radialGradient><radialGradient id="sb2" cx="0.35" cy="0.65" r="0.75"><stop offset="0" stop-color="#6aa8e8"/><stop offset="0.5" stop-color="#2a6ab8"/><stop offset="1" stop-color="#164a88"/></radialGradient><radialGradient id="sg" cx="0.42" cy="0.36" r="0.65"><stop offset="0" stop-color="#ffffff"/><stop offset="0.5" stop-color="#c8c8c8"/><stop offset="1" stop-color="#6e6e6e"/></radialGradient><radialGradient id="sgr" cx="0.45" cy="0.4" r="0.6"><stop offset="0" stop-color="#c8ff70"/><stop offset="0.7" stop-color="#98e838"/><stop offset="1" stop-color="#70b828"/></radialGradient><linearGradient id="cyl" x1="0" y1="0" x2="1" y2="0"><stop offset="0" stop-color="#2a62a8"/><stop offset="0.35" stop-color="#5a9ae0"/><stop offset="1" stop-color="#1a4a88"/></linearGradient><linearGradient id="slab" x1="0" y1="0" x2="1" y2="0"><stop offset="0" stop-color="#3a78b8"/><stop offset="0.5" stop-color="#d0d8e0"/><stop offset="1" stop-color="#2a5a98"/></linearGradient></defs></svg>
<svg style="left:505px;top:105px;" width="22" height="23" viewBox="0 0 22 23"><path d="M1.2 1.8L13.8 7.4L10.8 10L17.8 17.4L14.4 20.4L8 12.6L5.4 15.6Z" fill="#15152e"/><path d="M3 3.6L10.5 7.2L6 10.5Z" fill="#3c3c68"/><path d="M18.2 17V21.6L21.4 19.3Z" fill="#000"/></svg>
<div style="left:505px;top:130px;width:22px;height:1px;background:#9a9a9a;"></div>
<div style="left:505px;top:131px;width:22px;height:1px;background:#fff;"></div>
<svg style="left:505px;top:133px;" width="22" height="23" viewBox="0 0 22 23"><circle cx="10.5" cy="11" r="10.2" fill="url(#sb)"/><path d="M18.2 17V21.6L21.4 19.3Z" fill="#000"/></svg>
<div style="left:505px;top:158px;width:22px;height:1px;background:#9a9a9a;"></div>
<div style="left:505px;top:159px;width:22px;height:1px;background:#fff;"></div>
<svg style="left:505px;top:161px;" width="22" height="23" viewBox="0 0 22 23"><defs><radialGradient id="s3" cx="0.35" cy="0.65" r="0.75"><stop offset="0" stop-color="#7ae8c8"/><stop offset="0.5" stop-color="#38a890"/><stop offset="1" stop-color="#185848"/></radialGradient></defs><circle cx="11" cy="11.5" r="10.6" fill="url(#s3)"/><path d="M4 6C7 0.8 17 0.8 20 8C21 11 20 13 18.5 14.5L13 9.5Z" fill="#e8e838"/><path d="M2.5 8.5C5 4 10 3 13 6L9 9Z" fill="#f0f080" opacity="0.7"/><path d="M8.5 14L12.5 14.6C15.5 14.6 16.6 12.4 15 10.4L13.2 8.6L15 7L18.6 11C20 14 17 17.5 12.5 17L8.5 16.4L8.8 18.5L4.5 15L9 12.2Z" fill="#111"/><path d="M18.2 17.5V22.1L21.4 19.8Z" fill="#000"/></svg>
<div style="left:505px;top:186px;width:22px;height:1px;background:#9a9a9a;"></div>
<div style="left:505px;top:187px;width:22px;height:1px;background:#fff;"></div>
<svg style="left:505px;top:189px;" width="22" height="23" viewBox="0 0 22 23"><path d="M3.5 20V10.5L8.5 7V12L13 14.5L18.5 10V17" stroke="#858585" stroke-width="2.8" fill="none" stroke-linejoin="round"/><path d="M3.5 20V10.5L8.5 7V12L13 14.5L18.5 10V17" stroke="#a8a8a8" stroke-width="0.8" fill="none"/><path d="M8.5 2V8" stroke="#555" stroke-width="0.8"/><circle cx="8.5" cy="2.2" r="1.5" fill="#e02020"/><path d="M12 20L16 17.5" stroke="#e02020" stroke-width="1.6"/><circle cx="12" cy="20" r="1.4" fill="#e02020"/><path d="M18.2 16V20.6L21.4 18.3Z" fill="#000"/></svg>
<div style="left:505px;top:214px;width:22px;height:1px;background:#9a9a9a;"></div>
<div style="left:505px;top:215px;width:22px;height:1px;background:#fff;"></div>
<svg style="left:505px;top:217px;" width="22" height="23" viewBox="0 0 22 23"><path d="M1.5 20.5L3.5 14.5L16 1.5L21 5.5L8.5 18.5Z" fill="#f08818"/><path d="M16 1.5L18 3L5.5 16.2L3.5 14.5Z" fill="#f8b050"/><path d="M19.2 4L21 5.5L8.5 18.5L6.8 17Z" fill="#c06008"/><path d="M1.5 20.5L3.5 14.5L8.5 18.5Z" fill="#f4dcc0"/><path d="M1.5 20.5L2.3 18.2L4 19.6Z" fill="#222"/><path d="M18.2 17V21.6L21.4 19.3Z" fill="#000"/></svg>
<div style="left:505px;top:242px;width:22px;height:1px;background:#9a9a9a;"></div>
<div style="left:505px;top:243px;width:22px;height:1px;background:#fff;"></div>
<svg style="left:505px;top:245px;" width="22" height="23" viewBox="0 0 22 23"><path d="M1 3.5C3 1 6 1.5 7.5 3.5L17 12.5L15 14.5L6 7.5C4 8 2 7 1 5Z" fill="#b8b8b8" stroke="#7a7a7a" stroke-width="0.6"/><path d="M1.5 14C2 12 4 11.5 5.5 12L12 14.5C14.5 15 16 17 16.5 19.5L14 20.5C13 18.5 11.5 17.5 9.5 17.5L4.5 17C2.5 17 1 16 1.5 14Z" fill="#c8c8c8" stroke="#7a7a7a" stroke-width="0.6"/><path d="M14 6.5L21 3V10Z M14 13L21 9.5V16.5Z" fill="#1040d0"/><path d="M18.2 17.5V22.1L21.4 19.8Z" fill="#000"/></svg>
<div style="left:505px;top:270px;width:22px;height:1px;background:#9a9a9a;"></div>
<div style="left:505px;top:271px;width:22px;height:1px;background:#fff;"></div>
<svg style="left:505px;top:273px;" width="22" height="23" viewBox="0 0 22 23"><path d="M3 10C3 5 8 2 13 3.5L14 1L18 6L12 7.5L12.8 5.5C9 4.5 5.5 6.5 5.5 10Z" fill="#8ab0d8"/><path d="M19 12C19 17 14 20 9 18.5L8 21L4 16L10 14.5L9.2 16.5C13 17.5 16.5 15.5 16.5 12Z" fill="#a8c0d8"/><path d="M6.5 9.5H12V7L17 11L12 15V12.5H6.5Z" fill="#3a68a8"/><path d="M18.2 17.5V22.1L21.4 19.8Z" fill="#000"/></svg>
<div style="left:505px;top:298px;width:22px;height:1px;background:#9a9a9a;"></div>
<div style="left:505px;top:299px;width:22px;height:1px;background:#fff;"></div>
<svg style="left:505px;top:301px;" width="22" height="23" viewBox="0 0 22 23"><path d="M1.5 20.5L3.5 14.5L16 1.5L21 5.5L8.5 18.5Z" fill="#1e7a4a"/><path d="M16 1.5L18 3L5.5 16.2L3.5 14.5Z" fill="#48a878"/><path d="M19.2 4L21 5.5L8.5 18.5L6.8 17Z" fill="#0e4a2a"/><path d="M1.5 20.5L3.5 14.5L8.5 18.5Z" fill="#f4dcc0"/><path d="M1.5 20.5L2.3 18.2L4 19.6Z" fill="#222"/><path d="M18.2 17V21.6L21.4 19.3Z" fill="#000"/></svg>
<div style="left:505px;top:326px;width:22px;height:1px;background:#9a9a9a;"></div>
<div style="left:505px;top:327px;width:22px;height:1px;background:#fff;"></div>
<svg style="left:505px;top:329px;" width="22" height="23" viewBox="0 0 22 23"><path d="M0 11.5H21M10.5 1V22" stroke="#1010d0" stroke-width="1.8" stroke-dasharray="2.4 2.2" fill="none"/><rect x="9" y="10" width="3" height="3" fill="#1010d0"/><path d="M18.2 17V21.6L21.4 19.3Z" fill="#000"/></svg>
<div style="left:505px;top:354px;width:22px;height:1px;background:#9a9a9a;"></div>
<div style="left:505px;top:355px;width:22px;height:1px;background:#fff;"></div>
<svg style="left:505px;top:357px;" width="22" height="23" viewBox="0 0 22 23"><path d="M1.5 1.5V20M19.5 1.5V20M1.5 10.5H19.5" stroke="#333" stroke-width="1.2" fill="none"/><path d="M4 2L13 5.5L9.5 9.5L18.5 19L11 15.5L13.5 11.5L5 8.5L8 5Z" fill="#f0f020" stroke="#a8a800" stroke-width="0.5"/><path d="M18.2 17V21.6L21.4 19.3Z" fill="#000"/></svg>
<div style="left:505px;top:382px;width:22px;height:1px;background:#9a9a9a;"></div>
<div style="left:505px;top:383px;width:22px;height:1px;background:#fff;"></div>
<svg style="left:505px;top:385px;" width="22" height="23" viewBox="0 0 22 23"><path d="M2 6L5.5 2.5L9 6L5.5 9.5Z" fill="#fff" stroke="#111" stroke-width="1"/><path d="M7.5 4.5C10 1.5 14 2.5 17.5 3" stroke="#111" stroke-width="1" fill="none"/><path d="M8.5 8H15.5M12 8V12" stroke="#111" stroke-width="1.2"/><path d="M10 8H14L12 11Z" fill="#111"/><rect x="8" y="12.5" width="8" height="8.5" fill="#fff" stroke="#111" stroke-width="1.1"/><text x="9.3" y="20" font-family="Liberation Sans" font-weight="bold" font-size="8" fill="#111">A</text><path d="M18.4 15.5V20.1L21.599999999999998 17.8Z" fill="#000"/></svg>
<div style="left:505px;top:410px;width:22px;height:1px;background:#9a9a9a;"></div>
<div style="left:505px;top:411px;width:22px;height:1px;background:#fff;"></div>
<svg style="left:505px;top:413px;" width="22" height="23" viewBox="0 0 22 23"><path d="M9 9L17 0.5L21 3.5L13 12.5Z" fill="#2a70c8"/><path d="M9 9L13 12.5L8 14Z" fill="#f0d0b0"/><text x="-0.5" y="21.5" font-family="Liberation Sans" font-weight="bold" font-style="italic" font-size="17" fill="#0a0a88">A</text><text x="12" y="21" font-family="Liberation Sans" font-weight="bold" font-size="10" fill="#0a0a88">b</text><path d="M18.5 16.5V21.1L21.7 18.8Z" fill="#000"/></svg>
<div style="left:505px;top:438px;width:22px;height:1px;background:#9a9a9a;"></div>
<div style="left:505px;top:439px;width:22px;height:1px;background:#fff;"></div>
<svg style="left:505px;top:441px;" width="22" height="23" viewBox="0 0 22 23"><defs><pattern id="ph2" width="4" height="4" patternUnits="userSpaceOnUse" patternTransform="rotate(-45)"><rect width="4" height="4" fill="#eef2f8"/><rect width="4" height="1.3" fill="#5a6a98"/></pattern></defs><rect x="0.6" y="1" width="20" height="19.5" fill="url(#ph2)" stroke="#8a98c0" stroke-width="1"/><rect x="1.4" y="8" width="18.4" height="5.6" fill="#fff"/><path d="M18.2 16.5V21.1L21.4 18.8Z" fill="#000"/></svg>
<div style="left:505px;top:466px;width:22px;height:1px;background:#9a9a9a;"></div>
<div style="left:505px;top:467px;width:22px;height:1px;background:#fff;"></div>
<svg style="left:505px;top:469px;" width="22" height="23" viewBox="0 0 22 23"><circle cx="10.5" cy="11" r="10.2" fill="#0808d0"/><circle cx="10.5" cy="5.2" r="1.9" fill="#fff"/><rect x="8.8" y="8.4" width="3.6" height="9.2" fill="#fff"/><path d="M18.4 17.2V21.799999999999997L21.599999999999998 19.5Z" fill="#000"/></svg>
<div style="left:505px;top:494px;width:22px;height:1px;background:#9a9a9a;"></div>
<div style="left:505px;top:495px;width:22px;height:1px;background:#fff;"></div>
<svg style="left:505px;top:498px;" width="22" height="23" viewBox="0 0 22 23"><path d="M0.8 1V21.2H21" stroke="#444" stroke-width="1" fill="none"/><path d="M3 13L14 2.5L21 2V7L9.5 18Z" fill="#4a90d8"/><path d="M14 2.5L21 2L19 4L12.5 5Z" fill="#7ab0e8"/><path d="M3 13L8.5 8L12 11.5V13.5L6.5 18.5L4 17Z" fill="#e81010"/><path d="M3 13L8.5 8L12 11.5L6.5 16Z" fill="#ff3030"/></svg>
<svg style="left:535px;top:105px;" width="22" height="23" viewBox="0 0 22 23"><path d="M2 1.5L13 6L9.5 8.5L18.5 18L16 20.5L7 11L4.5 14.5Z" fill="#fff" stroke="#9a9a9a" stroke-width="1.1"/></svg>
<svg style="left:535px;top:134px;" width="22" height="23" viewBox="0 0 22 23"><path d="M2 6L11 1L20 5.5V16L11 21L2 16.5Z" fill="#2a66b0"/><path d="M2 6L11 10.5V21L2 16.5Z" fill="#8ad0f8"/><path d="M2 6L11 1L20 5.5L11 10.5Z" fill="#1f5498"/></svg>
<svg style="left:535px;top:158px;" width="22" height="23" viewBox="0 0 22 23"><path d="M3.5 4V18C3.5 22 18.5 22 18.5 18V4Z" fill="url(#cyl)"/><ellipse cx="11" cy="4" rx="7.5" ry="3.2" fill="#3a78c0"/></svg>
<svg style="left:535px;top:182px;" width="22" height="23" viewBox="0 0 22 23"><circle cx="11" cy="11" r="10.4" fill="url(#sb2)"/></svg>
<svg style="left:535px;top:208px;" width="22" height="23" viewBox="0 0 22 23"><ellipse cx="11" cy="8" rx="10" ry="6.4" fill="none" stroke="#2a68b0" stroke-width="3.2"/><ellipse cx="11" cy="7" rx="10" ry="6" fill="none" stroke="#6aa8e0" stroke-width="1"/></svg>
<svg style="left:535px;top:230px;" width="22" height="23" viewBox="0 0 22 23"><path d="M2 6.5L6.5 1.5H15.5L20 6.5V15L15.5 20H6.5L2 15Z" fill="#1f5498"/><path d="M2 6.5L6.5 11H15.5L20 6.5L15.5 1.5H6.5Z" fill="#1a4a88"/><path d="M6.5 11H15.5V20H6.5Z" fill="#a8ecf8"/><path d="M2 6.5L6.5 11V20L2 15Z" fill="#3a78c0"/></svg>
<svg style="left:535px;top:259px;" width="22" height="23" viewBox="0 0 22 23"><path d="M3.4 5.6C5 2 9.4 2 13 4.8L18.6 9.6C21 12.4 19.4 16 16 16C12.6 15.8 6.4 12.2 3.8 9.6C2.4 8.2 2.6 6.8 3.4 5.6Z" fill="#e8f0f8" stroke="#2a68b0" stroke-width="3.2" stroke-linejoin="round"/><path d="M3.2 5C5 1.6 9.6 1.4 13.4 4.2L19 9" fill="none" stroke="#6aa8e0" stroke-width="1"/><path d="M4 10.6C7 13.6 12.6 16.8 16 17.2C18.6 17.4 20.4 15.6 20.6 13.4" fill="none" stroke="#18488a" stroke-width="1.2"/></svg>
<svg style="left:535px;top:281px;" width="22" height="23" viewBox="0 0 22 23"><path d="M20.5 1C17 6 12 6.5 8 9C4.5 11 2.5 14 3 18" stroke="#2a62a8" stroke-width="3.4" fill="none"/><path d="M20.5 1C17 6 12 6.5 8 9" stroke="#6aa8e0" stroke-width="1.1" fill="none"/><circle cx="8.5" cy="18.5" r="2.6" fill="#fff" stroke="#333" stroke-width="1.1"/><path d="M1.5 21L6 17" stroke="#333" stroke-width="1"/></svg>
<svg style="left:535px;top:307px;" width="22" height="23" viewBox="0 0 22 23"><path d="M1.5 10C1.5 5 5 2 9 2V20C5 21 1.5 18 1.5 14Z" fill="#2a66b0"/><circle cx="5" cy="14" r="2.6" fill="#6aa8e0"/><path d="M12 1.5C17 1.5 20.5 5 20.5 11V18H12Z" fill="#4a88c8"/><path d="M14 9C17 8 20.5 10 20.5 13V18H14Z" fill="#f0a0b8"/><path d="M10.5 0.5V21.5" stroke="#6a6a6a" stroke-width="1"/></svg>
<svg style="left:535px;top:331px;" width="22" height="23" viewBox="0 0 22 23"><path d="M6 2H16L21 13L11 20.5L1 13Z" fill="#2a66b0"/><path d="M6 2H16L18 6L11 10L4 6Z" fill="#1f5498"/><path d="M1 13L4 6L11 10V20.5Z" fill="#3a80c8"/></svg>
<svg style="left:535px;top:354px;" width="22" height="23" viewBox="0 0 22 23"><ellipse cx="11" cy="4.5" rx="8.6" ry="3.4" fill="none" stroke="#2a68b8" stroke-width="2"/><ellipse cx="11" cy="8.5" rx="8.6" ry="3.4" fill="none" stroke="#5a98d8" stroke-width="2"/><ellipse cx="11" cy="12.5" rx="8.6" ry="3.4" fill="none" stroke="#2a68b8" stroke-width="2"/><ellipse cx="11" cy="16.5" rx="8.6" ry="3.4" fill="none" stroke="#5a98d8" stroke-width="2"/></svg>
<svg style="left:535px;top:382px;" width="22" height="23" viewBox="0 0 22 23"><path d="M2 8L13 1.5L21 4V14L10 21.5L2 19Z" fill="#2a66b0"/><path d="M2 8L13 1.5L21 4L10 10.5Z" fill="#4a88c8"/><path d="M4 11L10 12.5L19 7V13L10 19L4 17.5Z" fill="#d0d4d8"/><path d="M4 11L10 12.5V19L4 17.5Z" fill="#e8ecf0"/></svg>
<svg style="left:535px;top:410px;" width="22" height="23" viewBox="0 0 22 23"><path d="M1.5 9L13 2L21 4.5V11L9.5 18.5L1.5 16Z" fill="url(#slab)"/><path d="M1.5 9L9.5 11.5V18.5L1.5 16Z" fill="#8ac8f0"/><path d="M1.5 9L13 2L21 4.5L9.5 11.5Z" fill="#5a90c8" opacity="0.8"/></svg>
<svg style="left:535px;top:438px;" width="22" height="23" viewBox="0 0 22 23"><circle cx="7.5" cy="8" r="7" fill="url(#sg)"/><circle cx="14" cy="13" r="7.2" fill="url(#sg)"/></svg>
<svg style="left:535px;top:461px;" width="22" height="23" viewBox="0 0 22 23"><circle cx="11" cy="11" r="10.4" fill="url(#sg)"/><path d="M19.5 5C22.5 9.5 21 17 15 20.5C12.5 17 14 9 19.5 5Z" fill="#f0f030"/></svg>
<svg style="left:535px;top:486px;" width="22" height="23" viewBox="0 0 22 23"><circle cx="7.5" cy="7.5" r="7" fill="url(#sg)"/><circle cx="14" cy="13.5" r="7" fill="url(#sg)"/><path d="M8.5 10C10 6.5 13 6 14.5 7.5C14 11 12 13.5 9 14C8 13 8 11.5 8.5 10Z" fill="#e0e020"/></svg>
<svg style="left:535px;top:509px;" width="22" height="23" viewBox="0 0 22 23"><circle cx="7.5" cy="8" r="7" fill="url(#sg)" opacity="0.85"/><circle cx="14.5" cy="13.5" r="7.2" fill="url(#sgr)"/></svg>
<div style="left:535px;top:130px;width:22px;height:1px;background:#9a9a9a;"></div>
<div style="left:535px;top:131px;width:22px;height:1px;background:#fff;"></div>
<div style="left:535px;top:254px;width:22px;height:1px;background:#9a9a9a;"></div>
<div style="left:535px;top:255px;width:22px;height:1px;background:#fff;"></div>
<div style="left:535px;top:378px;width:22px;height:1px;background:#9a9a9a;"></div>
<div style="left:535px;top:379px;width:22px;height:1px;background:#fff;"></div>
<div style="left:535px;top:406px;width:22px;height:1px;background:#9a9a9a;"></div>
<div style="left:535px;top:407px;width:22px;height:1px;background:#fff;"></div>
<div style="left:535px;top:434px;width:22px;height:1px;background:#9a9a9a;"></div>
<div style="left:535px;top:435px;width:22px;height:1px;background:#fff;"></div>
<div style="left:1856px;top:1011px;width:64px;height:29px;background:#dde2e5;"></div>
<svg style="left:1856px;top:1011px;" width="64" height="29" viewBox="0 0 64 29"><defs><clipPath id="lgc"><path d="M0 0H64V3C60 12 50 20 26 29H0Z"/></clipPath></defs><ellipse cx="29" cy="15" rx="27.5" ry="12.6" fill="#e2062c" transform="rotate(-7 29 15)" clip-path="url(#lgc)"/><text x="12" y="15.2" textLength="36" lengthAdjust="spacingAndGlyphs" font-family="Liberation Sans" font-weight="bold" font-size="9.5" fill="#fff" stroke="#fff" stroke-width="0.5">Data</text><text x="21" y="23.8" textLength="39" lengthAdjust="spacingAndGlyphs" font-family="Liberation Sans" font-weight="bold" font-style="italic" font-size="10" fill="#0a0a0a" stroke="#0a0a0a" stroke-width="0.5">Solid</text></svg>
</body></html>
